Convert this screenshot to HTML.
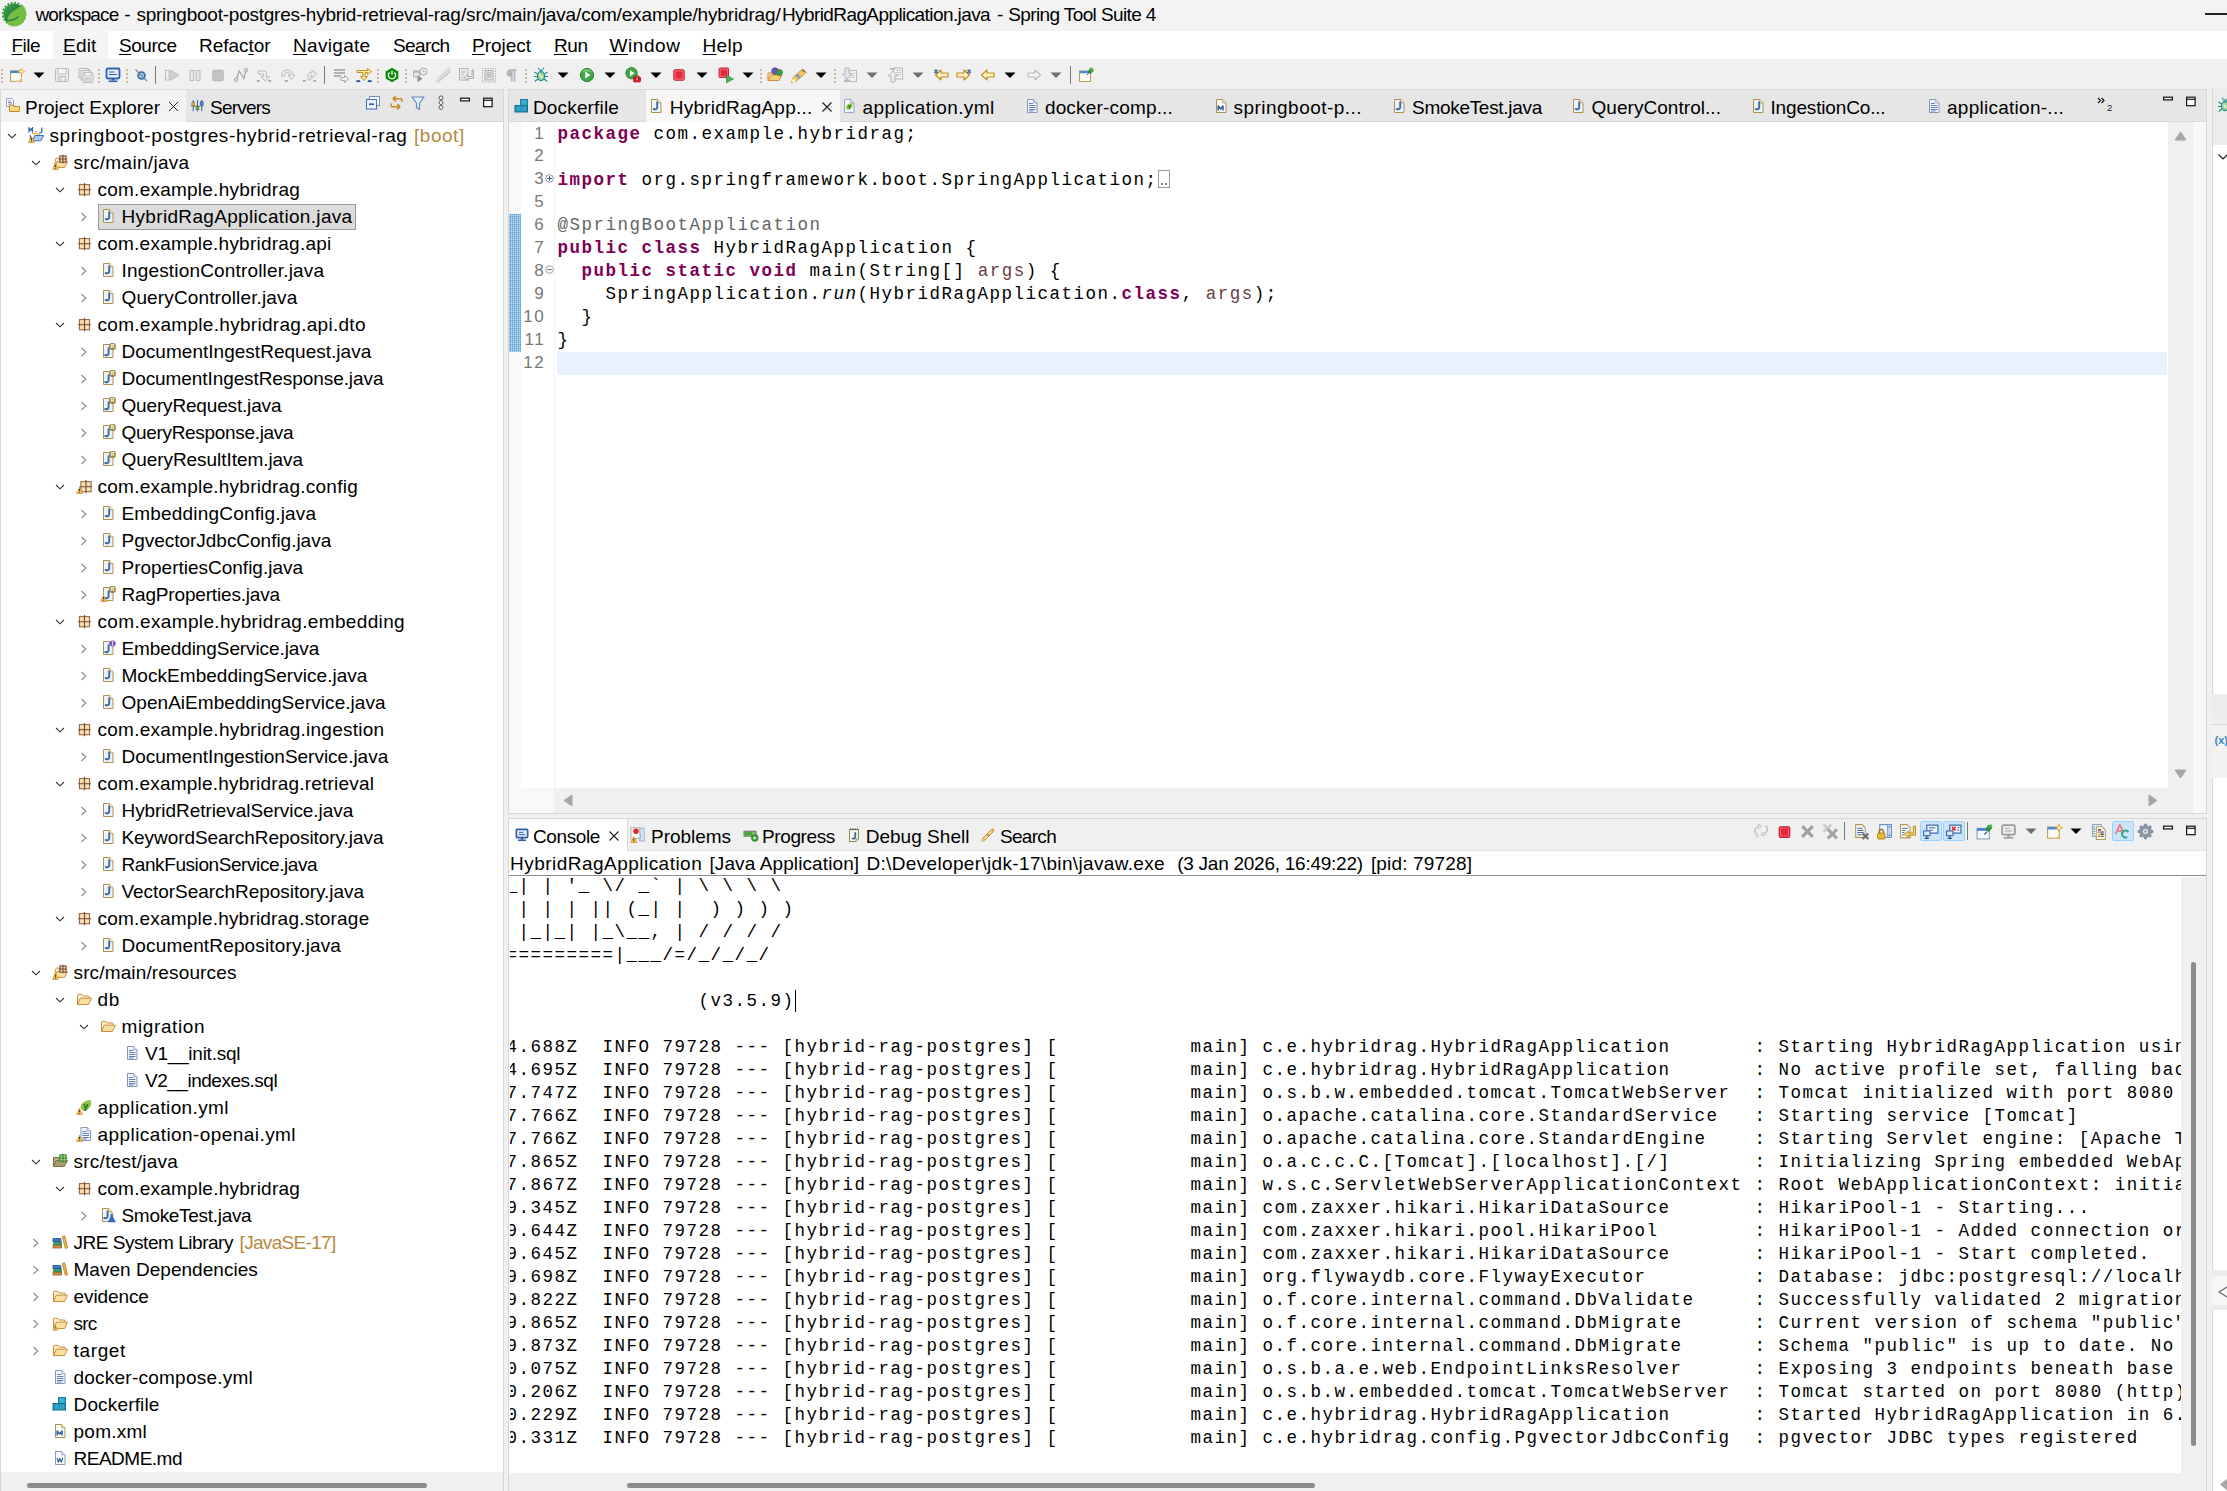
<!DOCTYPE html><html><head><meta charset="utf-8"><title>STS</title><style>
*{box-sizing:border-box;margin:0;padding:0}
html,body{width:2227px;height:1491px;overflow:hidden;background:#f0f0f0;font-family:'Liberation Sans',sans-serif;font-size:19px;color:#000}
.a{position:absolute}
.i{position:absolute;overflow:visible}
.t{position:absolute;white-space:pre;line-height:27px;height:27px}
.g{color:#b58a3c}
.m{font-family:'Liberation Mono',monospace;font-size:17.5px;letter-spacing:1.5px;white-space:pre}
.k{color:#7f0055;font-weight:bold}
.an{color:#646464}
.v{color:#6a3e3e}
u{text-decoration-thickness:1px;text-underline-offset:2px}
</style></head><body><svg width="0" height="0" style="position:absolute"><defs><symbol id="java" viewBox="0 0 16 16"><path d="M3.5 1.5h6.2l3.3 3.3v9.7h-9.5z" fill="#edf3fb" stroke="#b0904a" stroke-width="1"/><path d="M9.7 1.5v3.3h3.3" fill="#f7e9c4" stroke="#b0904a" stroke-width=".8"/><path d="M9.2 4.3v5.2c0 1.6-1.9 2.3-3.5 1.4" fill="none" stroke="#3d6ba3" stroke-width="1.9" stroke-linecap="round"/></symbol><symbol id="javaR" viewBox="0 0 16 16"><path d="M3.5 1.5h6.2l3.3 3.3v9.7h-9.5z" fill="#edf3fb" stroke="#b0904a" stroke-width="1"/><path d="M9.7 1.5v3.3h3.3" fill="#f7e9c4" stroke="#b0904a" stroke-width=".8"/><path d="M8.6 5.3v5.2c0 1.6-1.9 2.3-3.5 1.4" fill="none" stroke="#3d6ba3" stroke-width="1.9" stroke-linecap="round"/><rect x="9.8" y=".6" width="5.6" height="5.8" rx="1.4" fill="#a8923f" stroke="#8a7630" stroke-width=".7"/><text x="12.6" y="5.4" font-size="5" font-weight="bold" text-anchor="middle" fill="#fff" font-family="Liberation Sans">R</text></symbol><symbol id="javaRw" viewBox="0 0 16 16"><path d="M3.5 1.5h6.2l3.3 3.3v9.7h-9.5z" fill="#edf3fb" stroke="#b0904a" stroke-width="1"/><path d="M9.7 1.5v3.3h3.3" fill="#f7e9c4" stroke="#b0904a" stroke-width=".8"/><path d="M8.6 5.3v5.2c0 1.6-1.9 2.3-3.5 1.4" fill="none" stroke="#3d6ba3" stroke-width="1.9" stroke-linecap="round"/><rect x="9.8" y=".6" width="5.6" height="5.8" rx="1.4" fill="#a8923f" stroke="#8a7630" stroke-width=".7"/><text x="12.6" y="5.4" font-size="5" font-weight="bold" text-anchor="middle" fill="#fff" font-family="Liberation Sans">R</text><path d="M0.6 15.4 L3.5 9.2 L6.4 15.4 Z" fill="#f3c462" stroke="#c98f2b" stroke-width=".8" stroke-linejoin="round"/><path d="M3.5 11v2.3M3.5 14v.7" stroke="#3a2a10" stroke-width=".9"/></symbol><symbol id="javaI" viewBox="0 0 16 16"><path d="M3.5 1.5h6.2l3.3 3.3v9.7h-9.5z" fill="#edf3fb" stroke="#b0904a" stroke-width="1"/><path d="M9.7 1.5v3.3h3.3" fill="#f7e9c4" stroke="#b0904a" stroke-width=".8"/><path d="M8.6 5.3v5.2c0 1.6-1.9 2.3-3.5 1.4" fill="none" stroke="#3d6ba3" stroke-width="1.9" stroke-linecap="round"/><circle cx="12.6" cy="3.5" r="3" fill="#6b4bb5"/><path d="M11.5 1.9h2.2M12.6 1.9v3.2M11.5 5.1h2.2" stroke="#fff" stroke-width=".8"/></symbol><symbol id="javaT" viewBox="0 0 16 16"><path d="M2.5 1.5h6.2l3.3 3.3v9.7h-9.5z" fill="#edf3fb" stroke="#b0904a" stroke-width="1"/><path d="M8.7 1.5v3.3h3.3" fill="#f7e9c4" stroke="#b0904a" stroke-width=".8"/><path d="M7.6 4.3v5.2c0 1.6-1.9 2.3-3.5 1.4" fill="none" stroke="#3d6ba3" stroke-width="1.9" stroke-linecap="round"/><path d="M10.8 7.5h2v2.5l2.7 5h-7.4l2.7-5z" fill="#2f6fb8" stroke="#245a99" stroke-width=".5"/></symbol><symbol id="pkg" viewBox="0 0 16 16"><rect x="3.4" y="3.6" width="10.2" height="10.2" fill="#ecd2a0" stroke="#935f42" stroke-width="1"/><path d="M8.5 2v13.2M2 8.700h13" stroke="#7d4a34" stroke-width="1.100"/><path d="M4.400 4.600h3v3h-3zM9.600 4.600h3v3h-3zM4.400 9.800h3v3h-3zM9.600 9.800h3v3h-3z" fill="#f7e8c2" opacity=".800"/></symbol><symbol id="pkgw" viewBox="0 0 16 16"><g transform="translate(1.5,0)"><rect x="3.4" y="3.6" width="10.2" height="10.2" fill="#ecd2a0" stroke="#935f42" stroke-width="1"/><path d="M8.5 2v13.2M2 8.700h13" stroke="#7d4a34" stroke-width="1.100"/><path d="M4.400 4.600h3v3h-3zM9.600 4.600h3v3h-3zM4.400 9.800h3v3h-3zM9.600 9.800h3v3h-3z" fill="#f7e8c2" opacity=".800"/></g><path d="M0.6 15.4 L3.5 9.2 L6.4 15.4 Z" fill="#f3c462" stroke="#c98f2b" stroke-width=".8" stroke-linejoin="round"/><path d="M3.5 11v2.3M3.5 14v.7" stroke="#3a2a10" stroke-width=".9"/></symbol><symbol id="folder" viewBox="0 0 16 16"><path d="M1.5 13.5V4.2c0-.5.3-.8.8-.8h3.6l1.3 1.6h5.1c.5 0 .8.3.8.8v1.3" fill="#fbefcf" stroke="#c98d3c" stroke-width="1"/><path d="M1.6 13.5l2.6-6.300h11.300l-2.900 6.300z" fill="#f8dfa2" stroke="#c98d3c" stroke-width="1" stroke-linejoin="round"/></symbol><symbol id="folderw" viewBox="0 0 16 16"><path d="M1.5 13.5V4.2c0-.5.3-.8.8-.8h3.6l1.3 1.6h5.1c.5 0 .8.3.8.8v1.3" fill="#fbefcf" stroke="#c98d3c" stroke-width="1"/><path d="M1.6 13.5l2.6-6.300h11.300l-2.900 6.300z" fill="#f8dfa2" stroke="#c98d3c" stroke-width="1" stroke-linejoin="round"/><path d="M0.8 15.300 L3.300 10.200 L5.800 15.300 Z" fill="#f6d58a" stroke="#c98f2b" stroke-width=".7"/><path d="M3.300 11.800v1.800M3.300 14.200v.5" stroke="#3a2a10" stroke-width=".8"/></symbol><symbol id="srcf" viewBox="0 0 16 16"><path d="M2.300 13.300l1.400-8.300c.1-.6.400-.9 1-.9h2.500l.9 1" fill="#fbefcf" stroke="#c98d3c" stroke-width=".9"/><path d="M2.400 13.400l2.700-5.800h10.400l-3 5.800z" fill="#f8dfa2" stroke="#c98d3c" stroke-width="1" stroke-linejoin="round"/><g transform="translate(6.2,0.300) scale(.56)"><rect x="2.9" y="2.9" width="11.2" height="11.2" fill="#ecd0a0" stroke="#7a4a34" stroke-width="1.9"/><path d="M8.5 1v15M1 8.5h15" stroke="#7a4a34" stroke-width="1.9"/></g><path d="M0.6 15.4 L3.5 9.2 L6.4 15.4 Z" fill="#f3c462" stroke="#c98f2b" stroke-width=".8" stroke-linejoin="round"/><path d="M3.5 11v2.3M3.5 14v.7" stroke="#3a2a10" stroke-width=".9"/></symbol><symbol id="testf" viewBox="0 0 16 16"><path d="M1.500 13.500V4.500h5l1 1.400h3" fill="#b9ad86" stroke="#7d7048" stroke-width="1"/><path d="M1.600 13.500l2.600-6h11.200l-2.900 6z" fill="#a89c72" stroke="#7d7048" stroke-width="1" stroke-linejoin="round"/><g transform="translate(6.2,0.300) scale(.56)"><rect x="2.9" y="2.9" width="11.2" height="11.2" fill="#bfe39a" stroke="#2e7d1f" stroke-width="1.9"/><path d="M8.5 1v15M1 8.5h15" stroke="#2e7d1f" stroke-width="1.9"/></g></symbol><symbol id="proj" viewBox="0 0 16 16"><path d="M2.300 14.500V8" stroke="#4a7fc0" stroke-width="1.200"/><path d="M4 6.500h5l1 1h2" fill="none" stroke="#e0b85a" stroke-width="1.400"/><path d="M4.800 13.800l2-5.300h9l-3 5.300z" fill="#a9cdf2" stroke="#3f74b8" stroke-width="1" stroke-linejoin="round"/><path d="M1 5.500V1l1.700 2.200L4.400 1v4.500" fill="none" stroke="#2c65a6" stroke-width="1.300"/><path d="M13.800 .5v4c0 1.300-1.500 1.700-2.600 1" fill="none" stroke="#2c65a6" stroke-width="1.300"/><path d="M6.800 3.600l1 1.200h1" fill="none" stroke="#d9a33a" stroke-width="1"/><path d="M0.6 15.4 L3.5 9.2 L6.4 15.4 Z" fill="#f3c462" stroke="#c98f2b" stroke-width=".8" stroke-linejoin="round"/><path d="M3.5 11v2.3M3.5 14v.7" stroke="#3a2a10" stroke-width=".9"/></symbol><symbol id="file" viewBox="0 0 16 16"><path d="M3.5 1.5h6.2l3.3 3.3v9.7h-9.5z" fill="#f4f7fd" stroke="#8795b8" stroke-width="1"/><path d="M9.7 1.5v3.3h3.3" fill="#dfe6f5" stroke="#8795b8" stroke-width=".8"/><path d="M5 5.500h4M5 7.500h6.500M5 9.500h6.500M5 11.500h6.500M5 13h4.500" stroke="#5271b5" stroke-width=".9"/></symbol><symbol id="filew" viewBox="0 0 16 16"><g transform="translate(1.500,0)"><path d="M3.5 1.5h6.2l3.3 3.3v9.7h-9.5z" fill="#f4f7fd" stroke="#8795b8" stroke-width="1"/><path d="M9.7 1.5v3.3h3.3" fill="#dfe6f5" stroke="#8795b8" stroke-width=".8"/><path d="M5 5.500h4M5 7.500h6.500M5 9.500h6.500M5 11.500h6.500M5 13h4.500" stroke="#5271b5" stroke-width=".9"/></g><path d="M0.6 15.4 L3.5 9.2 L6.4 15.4 Z" fill="#f3c462" stroke="#c98f2b" stroke-width=".8" stroke-linejoin="round"/><path d="M3.5 11v2.3M3.5 14v.7" stroke="#3a2a10" stroke-width=".9"/></symbol><symbol id="yml" viewBox="0 0 16 16"><path d="M5 9c0-4 3-7 9.500-7.500c.8 5-1.500 9.500-6.500 9.500c-1.200 0-2.200-.5-3-2z" fill="#8cc63f" stroke="#6aa329" stroke-width=".6"/><text x="9.800" y="9.800" font-size="9" font-weight="bold" text-anchor="middle" fill="#116611" font-family="Liberation Sans">y</text><path d="M0.6 15.4 L3.5 9.2 L6.4 15.4 Z" fill="#f3c462" stroke="#c98f2b" stroke-width=".8" stroke-linejoin="round"/><path d="M3.5 11v2.3M3.5 14v.7" stroke="#3a2a10" stroke-width=".9"/></symbol><symbol id="ymltab" viewBox="0 0 16 16"><path d="M3.5 1.5h6.2l3.3 3.3v9.7h-9.5z" fill="#f4f7fd" stroke="#9aa6c4" stroke-width="1"/><path d="M9.7 1.5v3.3h3.3" fill="#dfe6f5" stroke="#9aa6c4" stroke-width=".8"/><path d="M5 10.500c0-3 1.500-5 6.500-5.500c.4 3.500-1 6.500-4.300 6.500c-.9 0-1.700-.300-2.200-1z" fill="#8cc63f"/><path d="M7 7l1.500 2v2M10 7L8.500 9" stroke="#176b17" stroke-width="1" fill="none"/></symbol><symbol id="docker" viewBox="0 0 16 16"><rect x="6.500" y="1.500" width="7" height="6" fill="#2aa8cc" stroke="#1d7d9c" stroke-width="1"/><rect x="1" y="7.500" width="12.500" height="6.500" fill="#1f8fb3" stroke="#196f8c" stroke-width="1"/><path d="M3 8.500v4.500M4.500 8.500v4.500M6 8.500v4.500M8.500 2.500v4M10 2.500v4M11.500 2.500v4M8.500 8.500v4.500M10 8.500v4.500M11.500 8.500v4.500" stroke="#4fc3e3" stroke-width=".6"/></symbol><symbol id="pom" viewBox="0 0 16 16"><path d="M3.5 1.5h6.2l3.3 3.3v9.7h-9.5z" fill="#fdfdf6" stroke="#a3915a" stroke-width="1"/><path d="M9.7 1.5v3.3h3.3" fill="#efe6c4" stroke="#a3915a" stroke-width=".8"/><path d="M5.200 12.500V8l2.400 3 2.400-3v4.500" fill="none" stroke="#2a5ea3" stroke-width="1.500" stroke-linejoin="round"/></symbol><symbol id="md" viewBox="0 0 16 16"><path d="M3.5 1.5h6.2l3.3 3.3v9.7h-9.5z" fill="#f7f9fd" stroke="#8a99ba" stroke-width="1"/><path d="M9.7 1.5v3.3h3.3" fill="#dfe6f5" stroke="#8a99ba" stroke-width=".8"/><path d="M5 8l1.300 4.300L7.800 8.500l1.500 3.800L10.700 8" fill="none" stroke="#2f5fa8" stroke-width="1.100" stroke-linejoin="round"/></symbol><symbol id="lib" viewBox="0 0 16 16"><rect x="1" y="11" width="8.500" height="3" fill="#d28a4a" stroke="#9c5a26" stroke-width=".8"/><rect x="1.800" y="7.800" width="7.500" height="3" fill="#3fa06b" stroke="#24724a" stroke-width=".8"/><rect x="1" y="4.600" width="7.800" height="3" fill="#3a78c2" stroke="#1f4f8f" stroke-width=".8"/><path d="M10.300 2.500l2.300-.8 3 12-2.300.7z" fill="#f0b450" stroke="#b67a1c" stroke-width=".8"/></symbol><symbol id="pexp" viewBox="0 0 16 16"><path d="M1.500 1.500h5l2 2v6h-7z" fill="#fff" stroke="#8795b8" stroke-width=".9"/><path d="M3 4h3M3 5.500h4M3 7h4" stroke="#5271b5" stroke-width=".7"/><path d="M4.500 14.500v-6.300h3.300l1 1.200h5.700v5.100z" fill="#f9d77a" stroke="#c08a2e" stroke-width="1"/></symbol><symbol id="servers" viewBox="0 0 16 16"><path d="M3.500 2v12M8 2v12M12.500 2v12" stroke="#3f6fb5" stroke-width="1.200"/><rect x="2" y="5" width="3" height="3.500" fill="#e8c24e" stroke="#8a6a1a" stroke-width=".7"/><rect x="6.500" y="9" width="3" height="3.500" fill="#6fb34a" stroke="#3a7a22" stroke-width=".7"/><rect x="11" y="4" width="3" height="3.500" fill="#4a90d9" stroke="#1f5a9c" stroke-width=".7"/><path d="M1 8.500h14" stroke="#555" stroke-width=".6"/></symbol><symbol id="console" viewBox="0 0 16 16"><rect x="1.500" y="1.500" width="13" height="9.500" rx="1.200" fill="#dfe9f7" stroke="#2f5fa5" stroke-width="1.900"/><path d="M4.500 5h5M4.500 7.500h7" stroke="#2f5fa5" stroke-width="1.100"/><path d="M3.500 14h9" stroke="#2f5fa5" stroke-width="1.800"/><path d="M8 11v2.500" stroke="#2f5fa5" stroke-width="2.600"/></symbol><symbol id="problems" viewBox="0 0 16 16"><rect x="1" y=".800" width="9" height="10.500" fill="#f4f8fd" stroke="#b0a67e" stroke-width=".800"/><path d="M9.800 1.200h4.200c.300 3 .300 6 0 9l1 3.800H9.500l1-3.800c-.500-3-.500-6-.700-9z" fill="#d6e6f7" stroke="#86a3cc" stroke-width=".800"/><circle cx="6" cy="4.300" r="2.700" fill="#e02a2a"/><path d="M.600 15.600L3.800 9.600 7 15.600z" fill="#f3c462" stroke="#c98f2b" stroke-width=".700" stroke-linejoin="round"/><path d="M3.800 11.500v2.300M3.800 14.400v.600" stroke="#3a2a10" stroke-width=".900"/></symbol><symbol id="progress" viewBox="0 0 16 16"><rect x="1" y="4.200" width="12" height="5" fill="#7cc36a" stroke="#5f6f66" stroke-width=".900"/><rect x="2" y="5.200" width="7" height="3" fill="#4aa53a"/><circle cx="11.800" cy="11" r="3.400" fill="#3e9a34" stroke="#2a7a24" stroke-width=".600"/><path d="M10.600 9.200l3 1.800-3 1.800z" fill="#fff"/></symbol><symbol id="dshell" viewBox="0 0 16 16"><path d="M3.500 2.500h9v9.500l-2.500 2.500h-6.500z" fill="#fdf8e2" stroke="#8a8a6a" stroke-width="1"/><path d="M12.500 12h-2.500v2.500" fill="#dfe9c8" stroke="#6f9a5a" stroke-width=".800"/><path d="M4.500 1.300v2M6.200 1.300v2M7.900 1.300v2M9.600 1.300v2M11.300 1.300v2" stroke="#555" stroke-width=".800"/><path d="M9.300 5.200v4.600c0 1.700-1.800 2.300-3.400 1.500" fill="none" stroke="#2f62a8" stroke-width="1.800"/></symbol><symbol id="search" viewBox="0 0 16 16"><path d="M1.500 14.500l3.500-1.500 8.500-8.500-2-2L3 11z" fill="#f3d48a" stroke="#b98a2e" stroke-width=".9"/><path d="M11.500 2.500l2 2 1.200-1.500-1.700-1.700z" fill="#d9a33a"/><path d="M7 7l2 2" stroke="#8a8a8a" stroke-width="1.500"/><path d="M1.500 14.500l2-.700-1.300-1.300z" fill="#fff7d0"/></symbol><symbol id="min" viewBox="0 0 16 16"><rect x="3.600" y="3.200" width="8.800" height="2.700" fill="#fff" stroke="#111" stroke-width="1.200"/></symbol><symbol id="max" viewBox="0 0 16 16"><rect x="3.600" y="3.200" width="8.500" height="8.500" fill="#fff" stroke="#111" stroke-width="1.200"/><path d="M3.600 5.300h8.500" stroke="#111" stroke-width="1.200"/></symbol><symbol id="collapse" viewBox="0 0 16 16"><rect x="4.500" y="1.500" width="10" height="9" fill="#fff" stroke="#6f8fc4" stroke-width="1"/><rect x="1.500" y="4.500" width="10" height="9.500" fill="#eef3fb" stroke="#4a74b5" stroke-width="1.100"/><path d="M4 9.200h5" stroke="#2d5b99" stroke-width="1.600"/></symbol><symbol id="link" viewBox="0 0 16 16"><path d="M13 3.500H4.500M4.500 3.500l3-2.500M4.500 3.500l3 2.500" fill="none" stroke="#c98d1c" stroke-width="1.500"/><path d="M3 11h8.500M11.500 11l-3-2.500M11.500 11l-3 2.500" fill="none" stroke="#c98d1c" stroke-width="1.500"/><path d="M13 3.500v3M3 11V8" stroke="#c98d1c" stroke-width="1.300"/></symbol><symbol id="filter" viewBox="0 0 16 16"><path d="M2 2h12l-4.500 6v6.500l-3-2V8z" fill="#eaf1fb" stroke="#5f86c2" stroke-width="1.200" stroke-linejoin="round"/></symbol><symbol id="dots3" viewBox="0 0 16 16"><circle cx="8" cy="2.800" r="1.900" fill="#fff" stroke="#555" stroke-width="1"/><circle cx="8" cy="7.600" r="1.900" fill="#fff" stroke="#555" stroke-width="1"/><circle cx="8" cy="12.400" r="1.900" fill="#fff" stroke="#555" stroke-width="1"/></symbol><symbol id="new" viewBox="0 0 16 16"><g transform="translate(0,.8)"><rect x="1.500" y="3" width="11" height="10.500" fill="#fdfdf5" stroke="#b59a56" stroke-width="1"/><rect x="1.500" y="3" width="11" height="2.300" fill="#4a86d4"/><path d="M12.500 9c0 3-2 4.500-6 4.500" fill="none" stroke="#f0d68a" stroke-width="1.200"/><path d="M12.300 .500l1 2.300 2.300 1-2.300 1-1 2.300-1-2.300-2.300-1 2.300-1z" fill="#fff3b8" stroke="#d6a02a" stroke-width=".800"/></g></symbol><symbol id="dd" viewBox="0 0 16 16"><path d="M1.700 5h12.600l-6.300 6.300z" fill="#000"/></symbol><symbol id="ddg" viewBox="0 0 16 16"><path d="M1.700 5h12.600l-6.300 6.300z" fill="#6e6e6e"/></symbol><symbol id="save" viewBox="0 0 16 16"><path d="M1.500 2.500c0-.600.400-1 1-1h11c.600 0 1 .400 1 1v11c0 .600-.400 1-1 1h-11c-.600 0-1-.400-1-1z" fill="#e9e9e9" stroke="#b8b8b8" stroke-width="1"/><rect x="4" y="1.500" width="8" height="5.500" fill="#f6f6f6" stroke="#b8b8b8" stroke-width=".800"/><rect x="4.500" y="9.500" width="7" height="5" fill="#dcdcdc" stroke="#b8b8b8" stroke-width=".800"/><rect x="8.500" y="10.500" width="1.800" height="3" fill="#f6f6f6"/></symbol><symbol id="saveall" viewBox="0 0 16 16"><path d="M1 1.500h9.500v3M1 1.500V11h2" fill="none" stroke="#b8b8b8" stroke-width="1"/><path d="M3 3.500h9.500v3M3 3.500V13h2" fill="none" stroke="#b8b8b8" stroke-width="1"/><rect x="5" y="5.500" width="10" height="10" rx="1" fill="#e9e9e9" stroke="#b8b8b8" stroke-width="1"/><rect x="7" y="5.500" width="6" height="3.500" fill="#f6f6f6" stroke="#b8b8b8" stroke-width=".700"/><rect x="7.500" y="11.500" width="5" height="4" fill="#dcdcdc" stroke="#b8b8b8" stroke-width=".700"/></symbol><symbol id="monitor" viewBox="0 0 16 16"><rect x="1.500" y="1.500" width="13" height="10" rx="1.500" fill="#e7effa" stroke="#2f62ad" stroke-width="1.800"/><path d="M4 5h5.500M4 7.500h8" stroke="#2f62ad" stroke-width="1.200"/><path d="M8 11.500v2" stroke="#2f62ad" stroke-width="2.500"/><path d="M3.500 14.300h9" stroke="#2f62ad" stroke-width="1.600"/></symbol><symbol id="skipbp" viewBox="0 0 16 16"><circle cx="8.500" cy="8.500" r="3.500" fill="#9fc3ea" stroke="#2a68b0" stroke-width="1.600"/><path d="M2.500 2.500l11.500 11.500" stroke="#7d8794" stroke-width="1.300"/></symbol><symbol id="resume" viewBox="0 0 16 16"><rect x="1.500" y="3.500" width="3.500" height="9.500" fill="#eee" stroke="#b8b8b8" stroke-width=".900"/><path d="M6.500 3.200l8.500 5-8.500 5z" fill="#d2d2d2" stroke="#b8b8b8" stroke-width=".900"/></symbol><symbol id="suspend" viewBox="0 0 16 16"><rect x="3" y="3.500" width="3.800" height="10" fill="#e6e6e6" stroke="#b8b8b8" stroke-width=".900"/><rect x="9.200" y="3.500" width="3.800" height="10" fill="#e6e6e6" stroke="#b8b8b8" stroke-width=".900"/></symbol><symbol id="term" viewBox="0 0 16 16"><rect x="3" y="3.500" width="10" height="10" rx="1" fill="#c4c4c4" stroke="#b8b8b8" stroke-width="1.400"/></symbol><symbol id="disc" viewBox="0 0 16 16"><path d="M3.500 12.500L6 4l5 7.500L13 3" fill="none" stroke="#a6a6a6" stroke-width="1.200"/><circle cx="3.200" cy="12.800" r="1.800" fill="#ddd" stroke="#a0a0a0" stroke-width=".800"/><circle cx="13" cy="3" r="1.800" fill="#ddd" stroke="#a0a0a0" stroke-width=".800"/></symbol><symbol id="stepin" viewBox="0 0 16 16"><path d="M2 4h6.500c1.500 0 2 .800 2 2v3.500h2.500l-4 4.500-4-4.500H7.500V7H2z" fill="#ececec" stroke="#b8b8b8" stroke-width=".900"/><path d="M1 14.500c.500-1 2-1 2.500 0M12.500 14.500c.500-1 2-1 2.500 0" stroke="#9a9a9a" stroke-width="1.300" fill="none"/></symbol><symbol id="stepover" viewBox="0 0 16 16"><path d="M1.500 9c0-4 2.500-6 6-6s5.500 2 5.500 5h2l-3.500 4.500L8 8h2.500c0-1.500-1-2.500-3-2.500S4.500 7 4.500 9z" fill="#ececec" stroke="#b8b8b8" stroke-width=".900"/><path d="M5 14.500c.500-1 2.500-1 3 0" stroke="#9a9a9a" stroke-width="1.300" fill="none"/></symbol><symbol id="stepret" viewBox="0 0 16 16"><path d="M6 13V8c0-1.500 1-2.500 2.500-2.500H10V3l4.500 4-4.500 4V8.500H9V13z" fill="#ececec" stroke="#b8b8b8" stroke-width=".900"/><path d="M1 14.500c.500-1 2-1 2.500 0M11.500 14.500c.500-1 2-1 2.500 0" stroke="#9a9a9a" stroke-width="1.300" fill="none"/></symbol><symbol id="dropframe" viewBox="0 0 16 16"><path d="M1 3h11M1 6h11M1 9h7" stroke="#9c9c9c" stroke-width="1.500"/><path d="M8 10.500h3.500V8.500l4 3.500-4 3.500v-2H8z" fill="#f4f4f4" stroke="#9c9c9c" stroke-width=".900"/></symbol><symbol id="stepfilt" viewBox="0 0 16 16"><path d="M1 3.500h10.500V1.500l4 3-4 3v-2H9v4h2.500l-3.500 4-3.500-4H7v-4H1z" fill="#fde9a8" stroke="#c98d1c" stroke-width="1"/><path d="M.500 14.800c.700-1.300 2.800-1.300 3.500 0M12 14.800c.700-1.300 2.800-1.300 3.500 0" stroke="#2d5b99" stroke-width="1.600" fill="none"/></symbol><symbol id="boot" viewBox="0 0 16 16"><path d="M8 .800l6.300 3.600v7.200L8 15.200l-6.300-3.600V4.400z" fill="#0a8a0a"/><path d="M5.500 5.500a3.600 3.600 0 1 0 5 0" fill="none" stroke="#fff" stroke-width="1.300"/><path d="M8 3.800v4" stroke="#fff" stroke-width="1.300"/></symbol><symbol id="g1" viewBox="0 0 16 16"><rect x="1.500" y="5" width="6" height="5" fill="#e4e4e4" stroke="#aaa" stroke-width=".900"/><path d="M1 4h7" stroke="#aaa" stroke-width="1.200"/><circle cx="11.500" cy="4.500" r="3.500" fill="#eee" stroke="#aaa" stroke-width="1"/><path d="M11.500 3v1.800h1.500" stroke="#aaa" stroke-width=".800" fill="none"/><path d="M5.500 8.500l5 3-5 4z" fill="#8e8e8e"/></symbol><symbol id="g2" viewBox="0 0 16 16"><path d="M.500 15l2.500-1 11-9V1.500L12 1 2 11z" fill="#dcdcdc" stroke="#cdcdcd" stroke-width=".600"/><path d="M3 14l11-9" stroke="#c0c0c0" stroke-width="1"/><path d="M.500 15h4" stroke="#d0d0d0" stroke-width="1"/></symbol><symbol id="g3" viewBox="0 0 16 16"><rect x="1.500" y="1.500" width="8.500" height="11.500" fill="#f2f2f2" stroke="#b0b0b0" stroke-width="1"/><path d="M3 4h5M3 6h5M3 8h3M3 10.500h3" stroke="#b8b8b8" stroke-width=".900"/><path d="M14 3v6.500H9.500V7.500L6 10.500l3.500 3v-2H15.500V3z" fill="#e6e6e6" stroke="#a8a8a8" stroke-width=".900"/></symbol><symbol id="g4" viewBox="0 0 16 16"><rect x="1.500" y="1.500" width="13" height="13.500" fill="#f0f0f0" stroke="#b4b4b4" stroke-width="1" stroke-dasharray="1.500 1"/><rect x="4" y="3.500" width="8" height="9.500" fill="#e2e2e2" stroke="#a8a8a8" stroke-width=".900"/><path d="M5.500 6h5M5.500 8h5M5.500 10h5" stroke="#a0a0a0" stroke-width=".900"/></symbol><symbol id="pilcrow" viewBox="0 0 16 16"><path d="M10.500 3v11.500M7.800 3v11.500M12.500 3H7c-2.200 0-3.500 1.200-3.500 3s1.300 3 3.500 3h1" fill="none" stroke="#b4b4b4" stroke-width="1.700"/><path d="M7 3.200c-1.800 0-2.800 1-2.800 2.800s1 2.800 2.800 2.800z" fill="#b4b4b4"/></symbol><symbol id="bug" viewBox="0 0 16 16"><ellipse cx="8" cy="9" rx="3.600" ry="4.600" fill="#9fd39a" stroke="#1f8a8a" stroke-width="1.200"/><circle cx="8" cy="4" r="1.800" fill="#3aa0a0"/><path d="M4.500 7L1.500 5M4.300 9.500H1M4.800 12l-3 2.500M11.500 7l3-2M11.700 9.500H15M11.200 12l3 2.500M6.500 2.500L5 .800M9.500 2.500L11 .800" stroke="#1f8a8a" stroke-width="1.100" fill="none"/><path d="M6.500 7.500l3 3.500" stroke="#e8f6e6" stroke-width="1.200"/></symbol><symbol id="run" viewBox="0 0 16 16"><circle cx="8" cy="8" r="6.600" fill="#3fa845" stroke="#1f7a2a" stroke-width=".900"/><path d="M3 5.500a5.500 5.500 0 0 1 10 0c-3-1.300-7-1.300-10 0z" fill="#8fd68f" opacity=".700"/><path d="M6.200 4.500l5.300 3.500-5.300 3.500z" fill="#fff"/></symbol><symbol id="runext" viewBox="0 0 16 16"><circle cx="6.500" cy="6.200" r="5.700" fill="#3fa845" stroke="#1f7a2a" stroke-width=".800"/><path d="M5 3.200l4.500 3-4.500 3z" fill="#fff"/><rect x="8.500" y="10" width="7" height="5" rx=".800" fill="#e0262d" stroke="#a5141a" stroke-width=".700"/><path d="M10.500 10V8.800h3V10M8.500 12h7" stroke="#a5141a" stroke-width=".900" fill="none"/><rect x="11.300" y="11.300" width="1.400" height="1.400" fill="#fff"/></symbol><symbol id="stop" viewBox="0 0 16 16"><rect x="2.800" y="2.800" width="10.400" height="10.400" rx="1.200" fill="#e8283a" stroke="#c01e2e" stroke-width="1"/><rect x="3.900" y="3.900" width="8.200" height="8.200" fill="none" stroke="#f58a94" stroke-width=".800"/></symbol><symbol id="relaunch" viewBox="0 0 16 16"><rect x="1" y="1" width="9.500" height="9.500" rx="1" fill="#e8283a" stroke="#c01e2e" stroke-width=".900"/><rect x="2.100" y="2.100" width="7.300" height="7.300" fill="none" stroke="#f58a94" stroke-width=".700"/><path d="M8.500 8.200l7 3.800-7 3.800z" fill="#4db356" stroke="#2d8a38" stroke-width=".700"/></symbol><symbol id="opentype" viewBox="0 0 16 16"><path d="M1 13.500V6h4l1 1.300h5.500V8.500" fill="#fbe7b0" stroke="#c98d3c" stroke-width="1"/><path d="M1.200 13.500l2.600-5.500h11l-2.800 5.500z" fill="#f5cf7a" stroke="#c98d3c" stroke-width="1" stroke-linejoin="round"/><circle cx="8" cy="4" r="3.300" fill="#6a55b8" stroke="#4a3a8a" stroke-width=".600"/><circle cx="12.500" cy="5.500" r="3" fill="#3e9a4a" stroke="#24702e" stroke-width=".600"/></symbol><symbol id="pen" viewBox="0 0 16 16"><path d="M.500 15.500l2-5.500 9-8 3.500 3.500-9.500 8.500z" fill="#f1c56a" stroke="#c08a2a" stroke-width=".800"/><path d="M4 8.500l3.500 3.500 2.500-2.300-3.500-3.500z" fill="#9a9aa0"/><path d="M.500 15.500l1.500-4 2.800 2.800z" fill="#fffbe0"/><path d="M11.500 2l3.500 3.500" stroke="#a87418" stroke-width="1"/><circle cx="12.200" cy="3.800" r=".900" fill="#2d5b99"/></symbol><symbol id="nextann" viewBox="0 0 16 16"><rect x="5.500" y="3.500" width="9" height="11" fill="#f2f2f2" stroke="#b8b8b8" stroke-width="1"/><path d="M8 6.500h5M8 8.500h5M8 10.500h5" stroke="#c4c4c4" stroke-width=".900"/><path d="M3 1h4v6h2.500L5 12 .500 7H3z" fill="#e6e6e6" stroke="#b0b0b0" stroke-width=".900"/><rect x="2" y="12.500" width="6" height="2.500" fill="#b8b8b8"/></symbol><symbol id="prevann" viewBox="0 0 16 16"><rect x="5.500" y="1" width="9" height="11" fill="#f2f2f2" stroke="#b8b8b8" stroke-width="1"/><path d="M8 3.500h5M8 5.500h5M8 7.500h5" stroke="#c4c4c4" stroke-width=".900"/><path d="M3 15h4V9h2.500L5 4 .500 9H3z" fill="#eee" stroke="#b0b0b0" stroke-width=".900"/><rect x="2" y="1" width="5" height="2" fill="#b8b8b8"/></symbol><symbol id="lastedit" viewBox="0 0 16 16"><path d="M2.5 8l5.500-5v3h7v4h-7v3z" fill="#fdf3c4" stroke="#c98d1c" stroke-width="1.200" stroke-linejoin="round"/><path d="M3 2v5M1 3.200l4 2.600M5 3.200l-4 2.600" stroke="#2d5b99" stroke-width="1"/></symbol><symbol id="nextedit" viewBox="0 0 16 16"><g transform="translate(16,0) scale(-1,1)"><path d="M2.5 8l5.500-5v3h7v4h-7v3z" fill="#fdf3c4" stroke="#c98d1c" stroke-width="1.200" stroke-linejoin="round"/><path d="M3 2v5M1 3.200l4 2.600M5 3.200l-4 2.600" stroke="#2d5b99" stroke-width="1"/></g></symbol><symbol id="back" viewBox="0 0 16 16"><path d="M1.5 8l5.500-5v3h7v4h-7v3z" fill="#fdf3c4" stroke="#c98d1c" stroke-width="1.200" stroke-linejoin="round"/></symbol><symbol id="fwdg" viewBox="0 0 16 16"><g transform="translate(16,0) scale(-1,1)"><path d="M1.5 8l5.500-5v3h7v4h-7v3z" fill="#f4f4f4" stroke="#bcbcbc" stroke-width="1.200" stroke-linejoin="round"/></g></symbol><symbol id="pined" viewBox="0 0 16 16"><rect x="1.500" y="4" width="11" height="10.500" fill="#fdfdf5" stroke="#b59a56" stroke-width="1"/><rect x="1.500" y="4" width="11" height="2.300" fill="#4a86d4"/><path d="M9 8l3-3" stroke="#555" stroke-width="1"/><path d="M10.500 4.500l2-3.500 3 2.500-3 3z" fill="#3a9a3a" stroke="#1f6f1f" stroke-width=".700"/><circle cx="13.500" cy="2.500" r="1.800" fill="#4db34d"/></symbol><symbol id="c_relaunch" viewBox="0 0 16 16"><path d="M2 9c-1-2 0-4 2-5l1.500 1.500L8 3 5 1.500 5.500 3C3 4 1.500 6 2 9z" fill="#f2f2f2" stroke="#b4b4b4" stroke-width=".800"/><path d="M11 3.500l2-1 1 2.500-1 .300c.800 1.500 0 3.500-2 4.500L9.500 8.500 7.500 11l3 1-.500-1c2.500-1 4-3.500 3-6" fill="#f2f2f2" stroke="#b4b4b4" stroke-width=".800"/><path d="M4 13.500c-1.500-1-2-2.500-1.500-4l1.500.500L5 12.500z" fill="#f2f2f2" stroke="#b4b4b4" stroke-width=".800"/></symbol><symbol id="c_stop" viewBox="0 0 16 16"><rect x="3" y="3.500" width="10" height="10" rx="1.200" fill="#e8283a" stroke="#c01e2e" stroke-width="1"/><rect x="4.200" y="4.700" width="7.600" height="7.600" fill="none" stroke="#f27a86" stroke-width=".700"/></symbol><symbol id="c_x" viewBox="0 0 16 16"><path d="M3 3l10 10M13 3L3 13" stroke="#a2a2a2" stroke-width="3"/></symbol><symbol id="c_xx" viewBox="0 0 16 16"><path d="M1.500 1.500l7 7M8.500 1.500l-7 7" stroke="#c8c8c8" stroke-width="2.200"/><path d="M5.500 6l8.500 8.500M14 6l-8.500 8.500" stroke="#a2a2a2" stroke-width="2.800"/></symbol><symbol id="c_clear" viewBox="0 0 16 16"><path d="M2.500 1.500h6l3 3v9h-9z" fill="#f6f8fc" stroke="#b39a5a" stroke-width="1"/><path d="M4 5h5M4 7h6M4 9h6M4 11h4" stroke="#4a6cb0" stroke-width="1"/><path d="M9 10l5.500 5M14.500 10L9 15" stroke="#6e6e6e" stroke-width="2"/></symbol><symbol id="c_lock" viewBox="0 0 16 16"><rect x="3.500" y="1.500" width="11" height="12" fill="#eaf3fd" stroke="#6a8cc4" stroke-width="1"/><rect x="11" y="1.500" width="3.500" height="12" fill="#c9d9f0" stroke="#6a8cc4" stroke-width=".800"/><rect x="12.200" y="3" width="1.200" height="1.200" fill="#2d5b99"/><rect x="12.200" y="11" width="1.200" height="1.200" fill="#2d5b99"/><rect x="1.500" y="9.500" width="7" height="5.500" rx="1" fill="#e9b93a" stroke="#a87a12" stroke-width=".800"/><path d="M3 9.500V8c0-2.500 4-2.500 4 0v1.500" fill="none" stroke="#a87a12" stroke-width="1.400"/></symbol><symbol id="c_wrap" viewBox="0 0 16 16"><path d="M1.500 1.500h6l3 3v9.500h-9z" fill="#fbfbf4" stroke="#b39a5a" stroke-width="1"/><path d="M3 5h5M3 7h3M3 9h2M3 11h2" stroke="#4a6cb0" stroke-width="1"/><path d="M13.500 3v6.500h-4.500v-2L5 10.500l4 3v-2h6.500V3z" fill="#f6d680" stroke="#b8861c" stroke-width=".900"/></symbol><symbol id="c_out" viewBox="0 0 16 16"><rect x="4.500" y="2" width="10.500" height="7.500" fill="#f4f8fd" stroke="#3465a8" stroke-width="1.100"/><path d="M6.500 4.500h6M6.500 6.800h4" stroke="#3465a8" stroke-width=".900"/><rect x="1.500" y="7.500" width="6" height="4.500" fill="#dce8f8" stroke="#3465a8" stroke-width="1"/><path d="M4.500 12v2M2.500 14.500h4" stroke="#2a4f8a" stroke-width="1.200"/></symbol><symbol id="c_err" viewBox="0 0 16 16"><rect x="4.500" y="2" width="10.500" height="7.500" fill="#f4f8fd" stroke="#3465a8" stroke-width="1.100"/><path d="M6.500 3.500l3.500 3.500M10 3.500L6.500 7" stroke="#e0262d" stroke-width="1.500"/><path d="M11.500 4.500h2M11.500 6.800h2" stroke="#3465a8" stroke-width=".900"/><rect x="1.500" y="7.500" width="6" height="4.500" fill="#dce8f8" stroke="#3465a8" stroke-width="1"/><path d="M4.500 12v2M2.500 14.500h4" stroke="#2a4f8a" stroke-width="1.200"/></symbol><symbol id="c_pin" viewBox="0 0 16 16"><rect x="1" y="5" width="11.500" height="10" fill="#f6faff" stroke="#8a9cc0" stroke-width="1"/><rect x="1" y="5" width="11.500" height="2.300" fill="#3f7ed0"/><path d="M8 11l2.500-3" stroke="#444" stroke-width="1"/><path d="M9.500 6l2-4 3.500 2.500-3 3.500z" fill="#2e9a3a" stroke="#1a6f24" stroke-width=".700"/><circle cx="13.500" cy="3" r="1.800" fill="#49b856"/></symbol><symbol id="c_disp" viewBox="0 0 16 16"><rect x="2" y="2" width="12" height="9" rx="1.200" fill="#ececec" stroke="#9c9c9c" stroke-width="1.600"/><path d="M4.500 5h4.500M4.500 7.500h7" stroke="#a6a6a6" stroke-width="1"/><path d="M8 11v2" stroke="#9c9c9c" stroke-width="2.200"/><path d="M3.500 14h9" stroke="#9c9c9c" stroke-width="1.500"/></symbol><symbol id="c_copy" viewBox="0 0 16 16"><rect x="1.500" y="1.500" width="8" height="11" fill="#eef3fb" stroke="#8a9cc0" stroke-width="1"/><path d="M5 3.500h5.500l3 3v9H5z" fill="#fffdf2" stroke="#b39a5a" stroke-width="1"/><path d="M6.500 6.500h3" stroke="#111" stroke-width="1.100"/><path d="M6.500 8.500h1.500" stroke="#e0262d" stroke-width="1.100"/><path d="M8.500 8.500h3.500" stroke="#1a3fd0" stroke-width="1.100"/><path d="M6.500 10.500h2" stroke="#e8a81c" stroke-width="1.100"/><path d="M9 10.500h3" stroke="#111" stroke-width="1.100"/><path d="M6.500 12.500h2" stroke="#e0262d" stroke-width="1.100"/><path d="M9 12.500h3" stroke="#1f8a2a" stroke-width="1.100"/><path d="M2.500 4h1M2.500 6h1M2.500 8h1M2.500 10h1" stroke="#1f8a2a" stroke-width="1"/></symbol><symbol id="c_ac" viewBox="0 0 16 16"><path d="M1.500 10.500L5.500 1.500 9 9.500M3 7.500h4.500" fill="none" stroke="#e8808a" stroke-width="1.700" stroke-linejoin="round"/><path d="M13.500 8.500c-1-1.500-3-2-4.500-1s-2 3-1 4.500 3 2 4.500 1.200" fill="none" stroke="#2aa88a" stroke-width="1.900"/></symbol><symbol id="c_gear" viewBox="0 0 16 16"><path d="M8 1l1 .100.400 1.800 1.300.600 1.600-1 1.300 1.300-1 1.600.600 1.300 1.800.400v1.800l-1.800.400-.600 1.300 1 1.600-1.300 1.300-1.600-1-1.300.600-.400 1.800H7l-.400-1.800-1.300-.600-1.600 1-1.300-1.300 1-1.600-.600-1.300L1 8.900V7.100l1.800-.400.600-1.300-1-1.600 1.300-1.300 1.600 1 1.300-.600L7 1.100z" fill="#8a97a8" stroke="#66748a" stroke-width=".600"/><circle cx="8" cy="8" r="3" fill="#e9edf3" stroke="#66748a" stroke-width=".700"/><circle cx="8" cy="8" r="1.200" fill="#8a97a8"/></symbol></defs></svg><div class="a" style="left:0px;top:0px;width:2227px;height:31px;background:#f3f3f3"></div><svg class="i" style="left:0px;top:0px;width:28px;height:28px" viewBox="0 0 28 28"><defs><linearGradient id="lg1" x1="0" y1="0" x2="1" y2="1"><stop offset="0" stop-color="#4aa84a"/><stop offset=".55" stop-color="#1c7f3c"/><stop offset="1" stop-color="#2a8a3e"/></linearGradient><clipPath id="lc"><circle cx="14" cy="14" r="12.300"/></clipPath></defs><circle cx="14" cy="14" r="10.600" fill="url(#lg1)"/><circle cx="14" cy="14" r="11.200" fill="none" stroke="#3a9a45" stroke-width="2" stroke-dasharray="1.900 1.600"/><g clip-path="url(#lc)"><path d="M23 5C17 8.500 11 12 8.500 16c-1.500 2.500-1.500 5 1 8l4.500 4h14V5z" fill="#76bd43"/><path d="M23.500 6.500A12 12 0 0 1 9 25l-3-3 8-3 6-6z" fill="#76bd43"/><path d="M7.800 18.500c.500-3 3-5.500 8-6.500 2.500-.500 4.500-1.500 6-3-.500 5-3 9-8.500 10-2 .400-4 .300-5.500-.500z" fill="#76bd43"/><path d="M5.500 20.500c4 .500 9-.500 13-4" fill="none" stroke="#1c7f3c" stroke-width="1.300"/></g></svg><span class="t" style="left:35.4px;top:1px;letter-spacing:-0.87px;">workspace</span><span class="t" style="left:124.3px;top:1px;letter-spacing:-0.428px;">-</span><span class="t" style="left:136.4px;top:1px;letter-spacing:-0.24px;">springboot-postgres-hybrid-retrieval-rag</span><span class="t" style="left:461px;top:1px;letter-spacing:-0.155px;">/src/main/java/com/example/hybridrag/</span><span class="t" style="left:781.9px;top:1px;letter-spacing:-0.586px;">HybridRagApplication.java</span><span class="t" style="left:996.9px;top:1px;letter-spacing:-0.428px;">-</span><span class="t" style="left:1008.2px;top:1px;letter-spacing:-0.608px;">Spring Tool Suite 4</span><div class="a" style="left:2205px;top:13px;width:22px;height:1.5px;background:#222"></div><div class="a" style="left:0px;top:31px;width:2227px;height:28px;background:#fff"></div><div class="a" style="left:52.5px;top:31px;width:55px;height:28px;background:#f5f5f5"></div><span class="t" style="left:11.5px;top:31.6px;letter-spacing:-0.531px;"><u>F</u>ile</span><span class="t" style="left:63px;top:31.6px;letter-spacing:0.188px;"><u>E</u>dit</span><span class="t" style="left:119px;top:31.6px;letter-spacing:-0.451px;"><u>S</u>ource</span><span class="t" style="left:199px;top:31.6px;letter-spacing:-0.039px;">Refac<u>t</u>or</span><span class="t" style="left:293px;top:31.6px;letter-spacing:0.312px;"><u>N</u>avigate</span><span class="t" style="left:393px;top:31.6px;letter-spacing:-0.617px;">Se<u>a</u>rch</span><span class="t" style="left:472px;top:31.6px;letter-spacing:-0.02px;"><u>P</u>roject</span><span class="t" style="left:554px;top:31.6px;letter-spacing:-0.453px;"><u>R</u>un</span><span class="t" style="left:609.5px;top:31.6px;letter-spacing:0.57px;"><u>W</u>indow</span><span class="t" style="left:702.5px;top:31.6px;letter-spacing:0.355px;"><u>H</u>elp</span><div class="a" style="left:0px;top:59px;width:2227px;height:30px;background:#f0f0f0"></div><div class="a" style="left:1px;top:68.5px;width:2px;height:2px;background:#c8b99a"></div><div class="a" style="left:1px;top:72.5px;width:2px;height:2px;background:#c8b99a"></div><div class="a" style="left:1px;top:76.5px;width:2px;height:2px;background:#c8b99a"></div><div class="a" style="left:1px;top:80.5px;width:2px;height:2px;background:#c8b99a"></div><svg class="i" style="left:9px;top:67px;width:16px;height:16px"><use href="#new"/></svg><svg class="i" style="left:32px;top:67.8px;width:14px;height:14px"><use href="#dd"/></svg><svg class="i" style="left:54px;top:67px;width:16px;height:16px"><use href="#save"/></svg><svg class="i" style="left:78px;top:67px;width:16px;height:16px"><use href="#saveall"/></svg><div class="a" style="left:98px;top:68.5px;width:2px;height:2px;background:#c8b99a"></div><div class="a" style="left:98px;top:72.5px;width:2px;height:2px;background:#c8b99a"></div><div class="a" style="left:98px;top:76.5px;width:2px;height:2px;background:#c8b99a"></div><div class="a" style="left:98px;top:80.5px;width:2px;height:2px;background:#c8b99a"></div><svg class="i" style="left:105px;top:67px;width:16px;height:16px"><use href="#monitor"/></svg><div class="a" style="left:126px;top:68.5px;width:2px;height:2px;background:#c8b99a"></div><div class="a" style="left:126px;top:72.5px;width:2px;height:2px;background:#c8b99a"></div><div class="a" style="left:126px;top:76.5px;width:2px;height:2px;background:#c8b99a"></div><div class="a" style="left:126px;top:80.5px;width:2px;height:2px;background:#c8b99a"></div><svg class="i" style="left:133px;top:67px;width:16px;height:16px"><use href="#skipbp"/></svg><div class="a" style="left:154.5px;top:66px;width:1px;height:18px;background:#7a7a7a"></div><svg class="i" style="left:164px;top:67px;width:16px;height:16px"><use href="#resume"/></svg><svg class="i" style="left:187px;top:67px;width:16px;height:16px"><use href="#suspend"/></svg><svg class="i" style="left:210px;top:67px;width:16px;height:16px"><use href="#term"/></svg><svg class="i" style="left:233px;top:67px;width:16px;height:16px"><use href="#disc"/></svg><svg class="i" style="left:256px;top:67px;width:16px;height:16px"><use href="#stepin"/></svg><svg class="i" style="left:279.6px;top:67px;width:16px;height:16px"><use href="#stepover"/></svg><svg class="i" style="left:302px;top:67px;width:16px;height:16px"><use href="#stepret"/></svg><div class="a" style="left:324.0px;top:66px;width:1px;height:18px;background:#7a7a7a"></div><svg class="i" style="left:332.5px;top:67px;width:16px;height:16px"><use href="#dropframe"/></svg><svg class="i" style="left:355.7px;top:67px;width:16px;height:16px"><use href="#stepfilt"/></svg><div class="a" style="left:377px;top:68.5px;width:2px;height:2px;background:#c8b99a"></div><div class="a" style="left:377px;top:72.5px;width:2px;height:2px;background:#c8b99a"></div><div class="a" style="left:377px;top:76.5px;width:2px;height:2px;background:#c8b99a"></div><div class="a" style="left:377px;top:80.5px;width:2px;height:2px;background:#c8b99a"></div><svg class="i" style="left:384px;top:67px;width:16px;height:16px"><use href="#boot"/></svg><div class="a" style="left:405px;top:68.5px;width:2px;height:2px;background:#c8b99a"></div><div class="a" style="left:405px;top:72.5px;width:2px;height:2px;background:#c8b99a"></div><div class="a" style="left:405px;top:76.5px;width:2px;height:2px;background:#c8b99a"></div><div class="a" style="left:405px;top:80.5px;width:2px;height:2px;background:#c8b99a"></div><svg class="i" style="left:412px;top:67px;width:16px;height:16px"><use href="#g1"/></svg><svg class="i" style="left:436px;top:67px;width:16px;height:16px"><use href="#g2"/></svg><svg class="i" style="left:458px;top:67px;width:16px;height:16px"><use href="#g3"/></svg><svg class="i" style="left:481px;top:67px;width:16px;height:16px"><use href="#g4"/></svg><svg class="i" style="left:504px;top:67px;width:16px;height:16px"><use href="#pilcrow"/></svg><div class="a" style="left:525px;top:68.5px;width:2px;height:2px;background:#c8b99a"></div><div class="a" style="left:525px;top:72.5px;width:2px;height:2px;background:#c8b99a"></div><div class="a" style="left:525px;top:76.5px;width:2px;height:2px;background:#c8b99a"></div><div class="a" style="left:525px;top:80.5px;width:2px;height:2px;background:#c8b99a"></div><svg class="i" style="left:533px;top:67px;width:16px;height:16px"><use href="#bug"/></svg><svg class="i" style="left:556px;top:67.8px;width:14px;height:14px"><use href="#dd"/></svg><svg class="i" style="left:579px;top:67px;width:16px;height:16px"><use href="#run"/></svg><svg class="i" style="left:602.5px;top:67.8px;width:14px;height:14px"><use href="#dd"/></svg><svg class="i" style="left:624.5px;top:67px;width:16px;height:16px"><use href="#runext"/></svg><svg class="i" style="left:648.8px;top:67.8px;width:14px;height:14px"><use href="#dd"/></svg><svg class="i" style="left:671.4px;top:67px;width:16px;height:16px"><use href="#stop"/></svg><svg class="i" style="left:694.7px;top:67.8px;width:14px;height:14px"><use href="#dd"/></svg><svg class="i" style="left:717.6px;top:67px;width:16px;height:16px"><use href="#relaunch"/></svg><svg class="i" style="left:740.6px;top:67.8px;width:14px;height:14px"><use href="#dd"/></svg><div class="a" style="left:760px;top:68.5px;width:2px;height:2px;background:#c8b99a"></div><div class="a" style="left:760px;top:72.5px;width:2px;height:2px;background:#c8b99a"></div><div class="a" style="left:760px;top:76.5px;width:2px;height:2px;background:#c8b99a"></div><div class="a" style="left:760px;top:80.5px;width:2px;height:2px;background:#c8b99a"></div><svg class="i" style="left:766.6px;top:67px;width:16px;height:16px"><use href="#opentype"/></svg><svg class="i" style="left:791px;top:67px;width:16px;height:16px"><use href="#pen"/></svg><svg class="i" style="left:814px;top:67.8px;width:14px;height:14px"><use href="#dd"/></svg><div class="a" style="left:834px;top:68.5px;width:2px;height:2px;background:#c8b99a"></div><div class="a" style="left:834px;top:72.5px;width:2px;height:2px;background:#c8b99a"></div><div class="a" style="left:834px;top:76.5px;width:2px;height:2px;background:#c8b99a"></div><div class="a" style="left:834px;top:80.5px;width:2px;height:2px;background:#c8b99a"></div><svg class="i" style="left:842px;top:67px;width:16px;height:16px"><use href="#nextann"/></svg><svg class="i" style="left:865px;top:67.8px;width:14px;height:14px"><use href="#ddg"/></svg><svg class="i" style="left:888px;top:67px;width:16px;height:16px"><use href="#prevann"/></svg><svg class="i" style="left:911px;top:67.8px;width:14px;height:14px"><use href="#ddg"/></svg><svg class="i" style="left:933px;top:67px;width:16px;height:16px"><use href="#lastedit"/></svg><svg class="i" style="left:956px;top:67px;width:16px;height:16px"><use href="#nextedit"/></svg><svg class="i" style="left:980px;top:67px;width:16px;height:16px"><use href="#back"/></svg><svg class="i" style="left:1003px;top:67.8px;width:14px;height:14px"><use href="#dd"/></svg><svg class="i" style="left:1026px;top:67px;width:16px;height:16px"><use href="#fwdg"/></svg><svg class="i" style="left:1049px;top:67.8px;width:14px;height:14px"><use href="#ddg"/></svg><div class="a" style="left:1069.5px;top:66px;width:1px;height:18px;background:#7a7a7a"></div><svg class="i" style="left:1078px;top:67px;width:16px;height:16px"><use href="#pined"/></svg><div class="a" style="left:0px;top:89px;width:504px;height:1402px;background:#fff;border:1px solid #d6d6d6;border-top-color:#dcdcdc"></div><div class="a" style="left:1px;top:90px;width:502px;height:32px;background:#e6e6e6;border-bottom:1px solid #dadada"></div><div class="a" style="left:1px;top:90px;width:185px;height:32px;background:#f3f3f3"></div><svg class="i" style="left:5px;top:97px;width:16px;height:16px"><use href="#pexp"/></svg><span class="t" style="left:25px;top:93.5px;letter-spacing:-0.011px;">Project Explorer</span><svg class="i" style="left:168px;top:101px;width:11px;height:11px" viewBox="0 0 11 11"><path d="M1 1l9 9M10 1l-9 9" stroke="#222" stroke-width="1"/></svg><svg class="i" style="left:190px;top:98px;width:15px;height:15px"><use href="#servers"/></svg><span class="t" style="left:210px;top:93.5px;letter-spacing:-0.781px;">Servers</span><svg class="i" style="left:365px;top:95px;width:16px;height:16px"><use href="#collapse"/></svg><svg class="i" style="left:388px;top:95px;width:17px;height:17px"><use href="#link"/></svg><svg class="i" style="left:410px;top:95px;width:16px;height:16px"><use href="#filter"/></svg><svg class="i" style="left:433px;top:94.7px;width:16px;height:16px"><use href="#dots3"/></svg><svg class="i" style="left:457px;top:94.5px;width:16px;height:16px"><use href="#min"/></svg><svg class="i" style="left:480px;top:94.6px;width:16px;height:16px"><use href="#max"/></svg><svg class="i" style="left:6px;top:131.8px;width:12px;height:8px" viewBox="0 0 12 8"><path d="M2 2L6 5.800l4-3.800" fill="none" stroke="#333" stroke-width="1.100"/></svg><svg class="i" style="left:28px;top:127px;width:16px;height:16px"><use href="#proj"/></svg><span class="t" style="left:49.5px;top:122px;letter-spacing:0.607px;">springboot-postgres-hybrid-retrieval-rag</span><span class="t" style="left:414px;top:122px;letter-spacing:0.526px;color:#b58a3c;">[boot]</span><svg class="i" style="left:30px;top:158.8px;width:12px;height:8px" viewBox="0 0 12 8"><path d="M2 2L6 5.800l4-3.800" fill="none" stroke="#333" stroke-width="1.100"/></svg><svg class="i" style="left:52px;top:154px;width:16px;height:16px"><use href="#srcf"/></svg><span class="t" style="left:73.5px;top:149px;letter-spacing:0.314px;">src/main/java</span><svg class="i" style="left:54px;top:185.8px;width:12px;height:8px" viewBox="0 0 12 8"><path d="M2 2L6 5.800l4-3.800" fill="none" stroke="#333" stroke-width="1.100"/></svg><svg class="i" style="left:76px;top:181px;width:16px;height:16px"><use href="#pkg"/></svg><span class="t" style="left:97.5px;top:176px;letter-spacing:0.239px;">com.example.hybridrag</span><div class="a" style="left:98px;top:204px;width:257.5px;height:26px;background:#dcdcdc;border:1px solid #9a9a9a"></div><svg class="i" style="left:80px;top:210.8px;width:8px;height:12px" viewBox="0 0 8 12"><path d="M1.500 2L5.800 6l-4.300 4" fill="none" stroke="#8c8c8c" stroke-width="1.100"/></svg><svg class="i" style="left:100px;top:208px;width:16px;height:16px"><use href="#java"/></svg><span class="t" style="left:121.5px;top:203px;letter-spacing:0.326px;">HybridRagApplication.java</span><svg class="i" style="left:54px;top:239.8px;width:12px;height:8px" viewBox="0 0 12 8"><path d="M2 2L6 5.800l4-3.800" fill="none" stroke="#333" stroke-width="1.100"/></svg><svg class="i" style="left:76px;top:235px;width:16px;height:16px"><use href="#pkg"/></svg><span class="t" style="left:97.5px;top:230px;letter-spacing:0.235px;">com.example.hybridrag.api</span><svg class="i" style="left:80px;top:264.8px;width:8px;height:12px" viewBox="0 0 8 12"><path d="M1.500 2L5.800 6l-4.300 4" fill="none" stroke="#8c8c8c" stroke-width="1.100"/></svg><svg class="i" style="left:100px;top:262px;width:16px;height:16px"><use href="#java"/></svg><span class="t" style="left:121.5px;top:257px;letter-spacing:0.172px;">IngestionController.java</span><svg class="i" style="left:80px;top:291.8px;width:8px;height:12px" viewBox="0 0 8 12"><path d="M1.500 2L5.800 6l-4.300 4" fill="none" stroke="#8c8c8c" stroke-width="1.100"/></svg><svg class="i" style="left:100px;top:289px;width:16px;height:16px"><use href="#java"/></svg><span class="t" style="left:121.5px;top:284px;letter-spacing:0.135px;">QueryController.java</span><svg class="i" style="left:54px;top:320.8px;width:12px;height:8px" viewBox="0 0 12 8"><path d="M2 2L6 5.800l4-3.800" fill="none" stroke="#333" stroke-width="1.100"/></svg><svg class="i" style="left:76px;top:316px;width:16px;height:16px"><use href="#pkg"/></svg><span class="t" style="left:97.5px;top:311px;letter-spacing:0.293px;">com.example.hybridrag.api.dto</span><svg class="i" style="left:80px;top:345.8px;width:8px;height:12px" viewBox="0 0 8 12"><path d="M1.500 2L5.800 6l-4.300 4" fill="none" stroke="#8c8c8c" stroke-width="1.100"/></svg><svg class="i" style="left:100px;top:343px;width:16px;height:16px"><use href="#javaR"/></svg><span class="t" style="left:121.5px;top:338px;letter-spacing:0.021px;">DocumentIngestRequest.java</span><svg class="i" style="left:80px;top:372.8px;width:8px;height:12px" viewBox="0 0 8 12"><path d="M1.500 2L5.800 6l-4.300 4" fill="none" stroke="#8c8c8c" stroke-width="1.100"/></svg><svg class="i" style="left:100px;top:370px;width:16px;height:16px"><use href="#javaR"/></svg><span class="t" style="left:121.5px;top:365px;letter-spacing:-0.08px;">DocumentIngestResponse.java</span><svg class="i" style="left:80px;top:399.8px;width:8px;height:12px" viewBox="0 0 8 12"><path d="M1.500 2L5.800 6l-4.300 4" fill="none" stroke="#8c8c8c" stroke-width="1.100"/></svg><svg class="i" style="left:100px;top:397px;width:16px;height:16px"><use href="#javaR"/></svg><span class="t" style="left:121.5px;top:392px;letter-spacing:-0.168px;">QueryRequest.java</span><svg class="i" style="left:80px;top:426.8px;width:8px;height:12px" viewBox="0 0 8 12"><path d="M1.500 2L5.800 6l-4.300 4" fill="none" stroke="#8c8c8c" stroke-width="1.100"/></svg><svg class="i" style="left:100px;top:424px;width:16px;height:16px"><use href="#javaR"/></svg><span class="t" style="left:121.5px;top:419px;letter-spacing:-0.313px;">QueryResponse.java</span><svg class="i" style="left:80px;top:453.8px;width:8px;height:12px" viewBox="0 0 8 12"><path d="M1.500 2L5.800 6l-4.300 4" fill="none" stroke="#8c8c8c" stroke-width="1.100"/></svg><svg class="i" style="left:100px;top:451px;width:16px;height:16px"><use href="#javaR"/></svg><span class="t" style="left:121.5px;top:446px;letter-spacing:-0.059px;">QueryResultItem.java</span><svg class="i" style="left:54px;top:482.8px;width:12px;height:8px" viewBox="0 0 12 8"><path d="M2 2L6 5.800l4-3.800" fill="none" stroke="#333" stroke-width="1.100"/></svg><svg class="i" style="left:76px;top:478px;width:16px;height:16px"><use href="#pkgw"/></svg><span class="t" style="left:97.5px;top:473px;letter-spacing:0.251px;">com.example.hybridrag.config</span><svg class="i" style="left:80px;top:507.79999999999995px;width:8px;height:12px" viewBox="0 0 8 12"><path d="M1.500 2L5.800 6l-4.300 4" fill="none" stroke="#8c8c8c" stroke-width="1.100"/></svg><svg class="i" style="left:100px;top:505px;width:16px;height:16px"><use href="#java"/></svg><span class="t" style="left:121.5px;top:500px;letter-spacing:0.181px;">EmbeddingConfig.java</span><svg class="i" style="left:80px;top:534.8px;width:8px;height:12px" viewBox="0 0 8 12"><path d="M1.500 2L5.800 6l-4.300 4" fill="none" stroke="#8c8c8c" stroke-width="1.100"/></svg><svg class="i" style="left:100px;top:532px;width:16px;height:16px"><use href="#java"/></svg><span class="t" style="left:121.5px;top:527px;letter-spacing:-0.021px;">PgvectorJdbcConfig.java</span><svg class="i" style="left:80px;top:561.8px;width:8px;height:12px" viewBox="0 0 8 12"><path d="M1.500 2L5.800 6l-4.300 4" fill="none" stroke="#8c8c8c" stroke-width="1.100"/></svg><svg class="i" style="left:100px;top:559px;width:16px;height:16px"><use href="#java"/></svg><span class="t" style="left:121.5px;top:554px;letter-spacing:-0.007px;">PropertiesConfig.java</span><svg class="i" style="left:80px;top:588.8px;width:8px;height:12px" viewBox="0 0 8 12"><path d="M1.500 2L5.800 6l-4.300 4" fill="none" stroke="#8c8c8c" stroke-width="1.100"/></svg><svg class="i" style="left:100px;top:586px;width:16px;height:16px"><use href="#javaRw"/></svg><span class="t" style="left:121.5px;top:581px;letter-spacing:-0.172px;">RagProperties.java</span><svg class="i" style="left:54px;top:617.8px;width:12px;height:8px" viewBox="0 0 12 8"><path d="M2 2L6 5.800l4-3.800" fill="none" stroke="#333" stroke-width="1.100"/></svg><svg class="i" style="left:76px;top:613px;width:16px;height:16px"><use href="#pkg"/></svg><span class="t" style="left:97.5px;top:608px;letter-spacing:0.346px;">com.example.hybridrag.embedding</span><svg class="i" style="left:80px;top:642.8px;width:8px;height:12px" viewBox="0 0 8 12"><path d="M1.500 2L5.800 6l-4.300 4" fill="none" stroke="#8c8c8c" stroke-width="1.100"/></svg><svg class="i" style="left:100px;top:640px;width:16px;height:16px"><use href="#javaI"/></svg><span class="t" style="left:121.5px;top:635px;letter-spacing:-0.092px;">EmbeddingService.java</span><svg class="i" style="left:80px;top:669.8px;width:8px;height:12px" viewBox="0 0 8 12"><path d="M1.500 2L5.800 6l-4.300 4" fill="none" stroke="#8c8c8c" stroke-width="1.100"/></svg><svg class="i" style="left:100px;top:667px;width:16px;height:16px"><use href="#java"/></svg><span class="t" style="left:121.5px;top:662px;letter-spacing:0.039px;">MockEmbeddingService.java</span><svg class="i" style="left:80px;top:696.8px;width:8px;height:12px" viewBox="0 0 8 12"><path d="M1.500 2L5.800 6l-4.300 4" fill="none" stroke="#8c8c8c" stroke-width="1.100"/></svg><svg class="i" style="left:100px;top:694px;width:16px;height:16px"><use href="#java"/></svg><span class="t" style="left:121.5px;top:689px;letter-spacing:0.041px;">OpenAiEmbeddingService.java</span><svg class="i" style="left:54px;top:725.8px;width:12px;height:8px" viewBox="0 0 12 8"><path d="M2 2L6 5.800l4-3.800" fill="none" stroke="#333" stroke-width="1.100"/></svg><svg class="i" style="left:76px;top:721px;width:16px;height:16px"><use href="#pkg"/></svg><span class="t" style="left:97.5px;top:716px;letter-spacing:0.261px;">com.example.hybridrag.ingestion</span><svg class="i" style="left:80px;top:750.8px;width:8px;height:12px" viewBox="0 0 8 12"><path d="M1.500 2L5.800 6l-4.300 4" fill="none" stroke="#8c8c8c" stroke-width="1.100"/></svg><svg class="i" style="left:100px;top:748px;width:16px;height:16px"><use href="#java"/></svg><span class="t" style="left:121.5px;top:743px;letter-spacing:-0.017px;">DocumentIngestionService.java</span><svg class="i" style="left:54px;top:779.8px;width:12px;height:8px" viewBox="0 0 12 8"><path d="M2 2L6 5.800l4-3.800" fill="none" stroke="#333" stroke-width="1.100"/></svg><svg class="i" style="left:76px;top:775px;width:16px;height:16px"><use href="#pkg"/></svg><span class="t" style="left:97.5px;top:770px;letter-spacing:0.205px;">com.example.hybridrag.retrieval</span><svg class="i" style="left:80px;top:804.8px;width:8px;height:12px" viewBox="0 0 8 12"><path d="M1.500 2L5.800 6l-4.300 4" fill="none" stroke="#8c8c8c" stroke-width="1.100"/></svg><svg class="i" style="left:100px;top:802px;width:16px;height:16px"><use href="#java"/></svg><span class="t" style="left:121.5px;top:797px;letter-spacing:-0.062px;">HybridRetrievalService.java</span><svg class="i" style="left:80px;top:831.8px;width:8px;height:12px" viewBox="0 0 8 12"><path d="M1.500 2L5.800 6l-4.300 4" fill="none" stroke="#8c8c8c" stroke-width="1.100"/></svg><svg class="i" style="left:100px;top:829px;width:16px;height:16px"><use href="#java"/></svg><span class="t" style="left:121.5px;top:824px;letter-spacing:-0.063px;">KeywordSearchRepository.java</span><svg class="i" style="left:80px;top:858.8px;width:8px;height:12px" viewBox="0 0 8 12"><path d="M1.500 2L5.800 6l-4.300 4" fill="none" stroke="#8c8c8c" stroke-width="1.100"/></svg><svg class="i" style="left:100px;top:856px;width:16px;height:16px"><use href="#java"/></svg><span class="t" style="left:121.5px;top:851px;letter-spacing:-0.417px;">RankFusionService.java</span><svg class="i" style="left:80px;top:885.8px;width:8px;height:12px" viewBox="0 0 8 12"><path d="M1.500 2L5.800 6l-4.300 4" fill="none" stroke="#8c8c8c" stroke-width="1.100"/></svg><svg class="i" style="left:100px;top:883px;width:16px;height:16px"><use href="#java"/></svg><span class="t" style="left:121.5px;top:878px;letter-spacing:-0.041px;">VectorSearchRepository.java</span><svg class="i" style="left:54px;top:914.8px;width:12px;height:8px" viewBox="0 0 12 8"><path d="M2 2L6 5.800l4-3.800" fill="none" stroke="#333" stroke-width="1.100"/></svg><svg class="i" style="left:76px;top:910px;width:16px;height:16px"><use href="#pkg"/></svg><span class="t" style="left:97.5px;top:905px;letter-spacing:0.199px;">com.example.hybridrag.storage</span><svg class="i" style="left:80px;top:939.8px;width:8px;height:12px" viewBox="0 0 8 12"><path d="M1.500 2L5.800 6l-4.300 4" fill="none" stroke="#8c8c8c" stroke-width="1.100"/></svg><svg class="i" style="left:100px;top:937px;width:16px;height:16px"><use href="#java"/></svg><span class="t" style="left:121.5px;top:932px;letter-spacing:0.15px;">DocumentRepository.java</span><svg class="i" style="left:30px;top:968.8px;width:12px;height:8px" viewBox="0 0 12 8"><path d="M2 2L6 5.800l4-3.800" fill="none" stroke="#333" stroke-width="1.100"/></svg><svg class="i" style="left:52px;top:964px;width:16px;height:16px"><use href="#srcf"/></svg><span class="t" style="left:73.5px;top:959px;letter-spacing:0.144px;">src/main/resources</span><svg class="i" style="left:54px;top:995.8px;width:12px;height:8px" viewBox="0 0 12 8"><path d="M2 2L6 5.800l4-3.800" fill="none" stroke="#333" stroke-width="1.100"/></svg><svg class="i" style="left:76px;top:991px;width:16px;height:16px"><use href="#folder"/></svg><span class="t" style="left:97.5px;top:986px;letter-spacing:0.68px;">db</span><svg class="i" style="left:78px;top:1022.8px;width:12px;height:8px" viewBox="0 0 12 8"><path d="M2 2L6 5.800l4-3.800" fill="none" stroke="#333" stroke-width="1.100"/></svg><svg class="i" style="left:100px;top:1018px;width:16px;height:16px"><use href="#folder"/></svg><span class="t" style="left:121.5px;top:1013px;letter-spacing:0.616px;">migration</span><svg class="i" style="left:124px;top:1045px;width:16px;height:16px"><use href="#file"/></svg><span class="t" style="left:145px;top:1040px;letter-spacing:-0.253px;">V1__init.sql</span><svg class="i" style="left:124px;top:1072px;width:16px;height:16px"><use href="#file"/></svg><span class="t" style="left:145px;top:1067px;letter-spacing:-0.483px;">V2__indexes.sql</span><svg class="i" style="left:76px;top:1099px;width:16px;height:16px"><use href="#yml"/></svg><span class="t" style="left:97.5px;top:1094px;letter-spacing:0.382px;">application.yml</span><svg class="i" style="left:76px;top:1126px;width:16px;height:16px"><use href="#filew"/></svg><span class="t" style="left:97.5px;top:1121px;letter-spacing:0.429px;">application-openai.yml</span><svg class="i" style="left:30px;top:1157.8px;width:12px;height:8px" viewBox="0 0 12 8"><path d="M2 2L6 5.800l4-3.800" fill="none" stroke="#333" stroke-width="1.100"/></svg><svg class="i" style="left:52px;top:1153px;width:16px;height:16px"><use href="#testf"/></svg><span class="t" style="left:73.5px;top:1148px;letter-spacing:0.256px;">src/test/java</span><svg class="i" style="left:54px;top:1184.8px;width:12px;height:8px" viewBox="0 0 12 8"><path d="M2 2L6 5.800l4-3.800" fill="none" stroke="#333" stroke-width="1.100"/></svg><svg class="i" style="left:76px;top:1180px;width:16px;height:16px"><use href="#pkg"/></svg><span class="t" style="left:97.5px;top:1175px;letter-spacing:0.244px;">com.example.hybridrag</span><svg class="i" style="left:80px;top:1209.8px;width:8px;height:12px" viewBox="0 0 8 12"><path d="M1.500 2L5.800 6l-4.300 4" fill="none" stroke="#8c8c8c" stroke-width="1.100"/></svg><svg class="i" style="left:100px;top:1207px;width:16px;height:16px"><use href="#javaT"/></svg><span class="t" style="left:121.5px;top:1202px;letter-spacing:-0.302px;">SmokeTest.java</span><svg class="i" style="left:32px;top:1236.8px;width:8px;height:12px" viewBox="0 0 8 12"><path d="M1.500 2L5.800 6l-4.300 4" fill="none" stroke="#8c8c8c" stroke-width="1.100"/></svg><svg class="i" style="left:52px;top:1234px;width:16px;height:16px"><use href="#lib"/></svg><span class="t" style="left:73.5px;top:1229px;letter-spacing:-0.465px;">JRE System Library</span><span class="t" style="left:239.6px;top:1229px;letter-spacing:-0.691px;color:#b58a3c;">[JavaSE-17]</span><svg class="i" style="left:32px;top:1263.8px;width:8px;height:12px" viewBox="0 0 8 12"><path d="M1.500 2L5.800 6l-4.300 4" fill="none" stroke="#8c8c8c" stroke-width="1.100"/></svg><svg class="i" style="left:52px;top:1261px;width:16px;height:16px"><use href="#lib"/></svg><span class="t" style="left:73.5px;top:1256px;letter-spacing:0.028px;">Maven Dependencies</span><svg class="i" style="left:32px;top:1290.8px;width:8px;height:12px" viewBox="0 0 8 12"><path d="M1.500 2L5.800 6l-4.300 4" fill="none" stroke="#8c8c8c" stroke-width="1.100"/></svg><svg class="i" style="left:52px;top:1288px;width:16px;height:16px"><use href="#folder"/></svg><span class="t" style="left:73.5px;top:1283px;letter-spacing:-0.095px;">evidence</span><svg class="i" style="left:32px;top:1317.8px;width:8px;height:12px" viewBox="0 0 8 12"><path d="M1.500 2L5.800 6l-4.300 4" fill="none" stroke="#8c8c8c" stroke-width="1.100"/></svg><svg class="i" style="left:52px;top:1315px;width:16px;height:16px"><use href="#folderw"/></svg><span class="t" style="left:73.5px;top:1310px;letter-spacing:-0.776px;">src</span><svg class="i" style="left:32px;top:1344.8px;width:8px;height:12px" viewBox="0 0 8 12"><path d="M1.500 2L5.800 6l-4.300 4" fill="none" stroke="#8c8c8c" stroke-width="1.100"/></svg><svg class="i" style="left:52px;top:1342px;width:16px;height:16px"><use href="#folder"/></svg><span class="t" style="left:73.5px;top:1337px;letter-spacing:0.651px;">target</span><svg class="i" style="left:52px;top:1369px;width:16px;height:16px"><use href="#file"/></svg><span class="t" style="left:73.5px;top:1364px;letter-spacing:0.234px;">docker-compose.yml</span><svg class="i" style="left:52px;top:1396px;width:16px;height:16px"><use href="#docker"/></svg><span class="t" style="left:73.5px;top:1391px;letter-spacing:0.162px;">Dockerfile</span><svg class="i" style="left:52px;top:1423px;width:16px;height:16px"><use href="#pom"/></svg><span class="t" style="left:73.5px;top:1418px;letter-spacing:0.258px;">pom.xml</span><svg class="i" style="left:52px;top:1450px;width:16px;height:16px"><use href="#md"/></svg><span class="t" style="left:73.5px;top:1445px;letter-spacing:-0.497px;">README.md</span><div class="a" style="left:1px;top:1472px;width:502px;height:19px;background:#f0f0f0"></div><div class="a" style="left:27px;top:1482.5px;width:400px;height:5px;background:#8c8c8c;border-radius:3px"></div><div class="a" style="left:508px;top:89px;width:1699px;height:725px;background:#fff;border:1px solid #d6d6d6"></div><div class="a" style="left:509px;top:90px;width:1697px;height:32px;background:#e6e6e6;border-bottom:1px solid #dadada"></div><div class="a" style="left:646px;top:90px;width:194px;height:32px;background:#f7f7f7"></div><svg class="i" style="left:514px;top:98px;width:16px;height:16px"><use href="#docker"/></svg><span class="t" style="left:533px;top:93.6px;letter-spacing:0.152px;">Dockerfile</span><svg class="i" style="left:648px;top:98px;width:16px;height:16px"><use href="#java"/></svg><span class="t" style="left:669.8px;top:93.6px;letter-spacing:0.213px;">HybridRagApp...</span><svg class="i" style="left:841px;top:98px;width:16px;height:16px"><use href="#ymltab"/></svg><span class="t" style="left:862.6px;top:93.6px;letter-spacing:0.429px;">application.yml</span><svg class="i" style="left:1024px;top:98px;width:16px;height:16px"><use href="#file"/></svg><span class="t" style="left:1044.9px;top:93.6px;letter-spacing:0.175px;">docker-comp...</span><svg class="i" style="left:1212.5px;top:98px;width:16px;height:16px"><use href="#pom"/></svg><span class="t" style="left:1233.6px;top:93.6px;letter-spacing:0.462px;">springboot-p...</span><svg class="i" style="left:1391px;top:98px;width:16px;height:16px"><use href="#java"/></svg><span class="t" style="left:1412px;top:93.6px;letter-spacing:-0.295px;">SmokeTest.java</span><svg class="i" style="left:1570px;top:98px;width:16px;height:16px"><use href="#java"/></svg><span class="t" style="left:1591.5px;top:93.6px;letter-spacing:0.045px;">QueryControl...</span><svg class="i" style="left:1749.5px;top:98px;width:16px;height:16px"><use href="#java"/></svg><span class="t" style="left:1770.5px;top:93.6px;letter-spacing:-0.161px;">IngestionCo...</span><svg class="i" style="left:1925.5px;top:98px;width:16px;height:16px"><use href="#file"/></svg><span class="t" style="left:1947px;top:93.6px;letter-spacing:0.266px;">application-...</span><svg class="i" style="left:821px;top:101px;width:12px;height:12px" viewBox="0 0 12 12"><path d="M1.500 1.500l9 9M10.500 1.500l-9 9" stroke="#222" stroke-width="1.200"/></svg><svg class="i" style="left:2097px;top:96px;width:16px;height:16px" viewBox="0 0 16 16"><path d="M1 2l2.500 2.500L1 7M4.500 2L7 4.500 4.500 7" fill="none" stroke="#111" stroke-width="1.200"/></svg><span class="t" style="left:2107px;top:94px;font-size:9.500px;color:#223">2</span><svg class="i" style="left:2160.3px;top:93.8px;width:16px;height:16px"><use href="#min"/></svg><svg class="i" style="left:2183.2px;top:94.3px;width:16px;height:16px"><use href="#max"/></svg><div class="a" style="left:509px;top:122px;width:12px;height:666px;background:#f8f8f8"></div><div class="a" style="left:554px;top:122px;width:1px;height:666px;background:#f3f3f3"></div><div class="a" style="left:2168px;top:122px;width:25px;height:666px;background:#f0f0f0"></div><div class="a" style="left:2193px;top:122px;width:13px;height:691px;background:#f8f8f8"></div><div class="a" style="left:554px;top:788px;width:1639px;height:25px;background:#f0f0f0"></div><div class="a" style="left:509px;top:788px;width:45px;height:25px;background:#f8f8f8"></div><svg class="i" style="left:2174px;top:131px;width:13px;height:10px" viewBox="0 0 13 10"><path d="M6.500 1l5.500 8H1z" fill="#a6a6a6" stroke="#a6a6a6" stroke-linejoin="round"/></svg><svg class="i" style="left:2174px;top:769px;width:13px;height:10px" viewBox="0 0 13 10"><path d="M6.500 9L12 1H1z" fill="#a6a6a6" stroke="#a6a6a6" stroke-linejoin="round"/></svg><svg class="i" style="left:563px;top:794px;width:10px;height:13px" viewBox="0 0 10 13"><path d="M1 6.500L9 1v11z" fill="#a6a6a6" stroke="#a6a6a6" stroke-linejoin="round"/></svg><svg class="i" style="left:2148px;top:794px;width:10px;height:13px" viewBox="0 0 10 13"><path d="M9 6.500L1 1v11z" fill="#a6a6a6" stroke="#a6a6a6" stroke-linejoin="round"/></svg><div class="a" style="left:509px;top:214px;width:12px;height:138px;background:#5aa0d8;background-image:repeating-linear-gradient(0deg,rgba(255,255,255,.35) 0 1px,transparent 1px 2px),repeating-linear-gradient(90deg,rgba(255,255,255,.35) 0 1px,transparent 1px 2px)"></div><div class="a" style="left:557px;top:352px;width:1610px;height:22.5px;background:#e8f2fe"></div><span class="t" style="left:509px;width:36.1px;text-align:right;letter-spacing:1.5px;top:122.5px;line-height:22.9px;height:22.9px;color:#787878;font-size:17px">1</span><span class="t m" style="left:557.5px;top:122.8px;line-height:22.9px;height:22.9px"><span class="k">package</span> com.example.hybridrag;</span><span class="t" style="left:509px;width:36.1px;text-align:right;letter-spacing:1.5px;top:145.4px;line-height:22.9px;height:22.9px;color:#787878;font-size:17px">2</span><span class="t" style="left:509px;width:36.1px;text-align:right;letter-spacing:1.5px;top:168.3px;line-height:22.9px;height:22.9px;color:#787878;font-size:17px">3</span><span class="t m" style="left:557.5px;top:168.6px;line-height:22.9px;height:22.9px"><span class="k">import</span> org.springframework.boot.SpringApplication;</span><span class="t" style="left:509px;width:36.1px;text-align:right;letter-spacing:1.5px;top:191.2px;line-height:22.9px;height:22.9px;color:#787878;font-size:17px">5</span><span class="t" style="left:509px;width:36.1px;text-align:right;letter-spacing:1.5px;top:214.1px;line-height:22.9px;height:22.9px;color:#787878;font-size:17px">6</span><span class="t m" style="left:557.5px;top:214.4px;line-height:22.9px;height:22.9px"><span class="an">@SpringBootApplication</span></span><span class="t" style="left:509px;width:36.1px;text-align:right;letter-spacing:1.5px;top:237.0px;line-height:22.9px;height:22.9px;color:#787878;font-size:17px">7</span><span class="t m" style="left:557.5px;top:237.3px;line-height:22.9px;height:22.9px"><span class="k">public</span> <span class="k">class</span> HybridRagApplication {</span><span class="t" style="left:509px;width:36.1px;text-align:right;letter-spacing:1.5px;top:259.9px;line-height:22.9px;height:22.9px;color:#787878;font-size:17px">8</span><span class="t m" style="left:557.5px;top:260.2px;line-height:22.9px;height:22.9px">  <span class="k">public</span> <span class="k">static</span> <span class="k">void</span> main(String[] <span class="v">args</span>) {</span><span class="t" style="left:509px;width:36.1px;text-align:right;letter-spacing:1.5px;top:282.8px;line-height:22.9px;height:22.9px;color:#787878;font-size:17px">9</span><span class="t m" style="left:557.5px;top:283.1px;line-height:22.9px;height:22.9px">    SpringApplication.<i>run</i>(HybridRagApplication.<span class="k">class</span>, <span class="v">args</span>);</span><span class="t" style="left:509px;width:36.1px;text-align:right;letter-spacing:1.5px;top:305.7px;line-height:22.9px;height:22.9px;color:#787878;font-size:17px">10</span><span class="t m" style="left:557.5px;top:306.0px;line-height:22.9px;height:22.9px">  }</span><span class="t" style="left:509px;width:36.1px;text-align:right;letter-spacing:1.5px;top:328.6px;line-height:22.9px;height:22.9px;color:#787878;font-size:17px">11</span><span class="t m" style="left:557.5px;top:328.9px;line-height:22.9px;height:22.9px">}</span><span class="t" style="left:509px;width:36.1px;text-align:right;letter-spacing:1.5px;top:351.5px;line-height:22.9px;height:22.9px;color:#787878;font-size:17px">12</span><svg class="i" style="left:545px;top:174px;width:9px;height:9px" viewBox="0 0 9 9"><circle cx="4.500" cy="4.500" r="3.800" fill="#fff" stroke="#7a8aa8" stroke-width=".900"/><path d="M2.300 4.500h4.400M4.500 2.300v4.400" stroke="#34507a" stroke-width="1"/></svg><svg class="i" style="left:545px;top:265px;width:9px;height:9px" viewBox="0 0 9 9"><circle cx="4.500" cy="4.500" r="3.800" fill="#fff" stroke="#9a9a9a" stroke-width=".900"/><path d="M2.300 4.500h4.400" stroke="#777" stroke-width="1"/></svg><div class="a" style="left:1158px;top:170px;width:12px;height:18px;border:1px solid #9a9a9a;background:#fff"></div><div class="a" style="left:1161px;top:183px;width:2px;height:1.5px;background:#888"></div><div class="a" style="left:1165px;top:183px;width:2px;height:1.5px;background:#888"></div><div class="a" style="left:508px;top:818px;width:1699px;height:673px;background:#fff;border:1px solid #d6d6d6;border-bottom:none"></div><div class="a" style="left:509px;top:819px;width:1697px;height:32px;background:#f0f0f0;border-bottom:1px solid #e2e2e2"></div><div class="a" style="left:509px;top:819px;width:119px;height:32px;background:#fff;border-right:1px solid #d8d8d8"></div><svg class="i" style="left:514.5px;top:827.6px;width:14px;height:14px"><use href="#console"/></svg><span class="t" style="left:533px;top:823px;letter-spacing:-0.388px;">Console</span><svg class="i" style="left:630px;top:827.2px;width:16px;height:16px"><use href="#problems"/></svg><span class="t" style="left:651px;top:823px;letter-spacing:-0.031px;">Problems</span><svg class="i" style="left:743px;top:827.2px;width:16px;height:16px"><use href="#progress"/></svg><span class="t" style="left:762px;top:823px;letter-spacing:-0.379px;">Progress</span><svg class="i" style="left:846px;top:827.2px;width:16px;height:16px"><use href="#dshell"/></svg><span class="t" style="left:865.7px;top:823px;letter-spacing:0.024px;">Debug Shell</span><svg class="i" style="left:980px;top:827.2px;width:16px;height:16px"><use href="#search"/></svg><span class="t" style="left:1000px;top:823px;letter-spacing:-0.701px;">Search</span><svg class="i" style="left:608px;top:830px;width:12px;height:12px" viewBox="0 0 12 12"><path d="M1.500 1.500l9 9M10.500 1.500l-9 9" stroke="#222" stroke-width="1.100"/></svg><svg class="i" style="left:1752.5px;top:822.5px;width:17px;height:17px"><use href="#c_relaunch"/></svg><svg class="i" style="left:1776.0px;top:822.5px;width:17px;height:17px"><use href="#c_stop"/></svg><svg class="i" style="left:1799.2px;top:822.5px;width:17px;height:17px"><use href="#c_x"/></svg><svg class="i" style="left:1821.5px;top:822.5px;width:17px;height:17px"><use href="#c_xx"/></svg><div class="a" style="left:1844.1px;top:822px;width:1px;height:18px;background:#7a7a7a"></div><svg class="i" style="left:1852.5px;top:822.5px;width:17px;height:17px"><use href="#c_clear"/></svg><svg class="i" style="left:1876.1px;top:822.5px;width:17px;height:17px"><use href="#c_lock"/></svg><svg class="i" style="left:1899.0px;top:822.5px;width:17px;height:17px"><use href="#c_wrap"/></svg><div class="a" style="left:1919.7px;top:820.5px;width:22px;height:20.5px;background:#cce4f7;border:1px solid #99d1ff;border-radius:2px"></div><svg class="i" style="left:1922.2px;top:822.5px;width:17px;height:17px"><use href="#c_out"/></svg><div class="a" style="left:1942.7px;top:820.5px;width:22px;height:20.5px;background:#cce4f7;border:1px solid #99d1ff;border-radius:2px"></div><svg class="i" style="left:1945.2px;top:822.5px;width:17px;height:17px"><use href="#c_err"/></svg><div class="a" style="left:1967.1px;top:822px;width:1px;height:18px;background:#7a7a7a"></div><svg class="i" style="left:1976.2px;top:822.5px;width:17px;height:17px"><use href="#c_pin"/></svg><svg class="i" style="left:1999.5px;top:822.5px;width:17px;height:17px"><use href="#c_disp"/></svg><svg class="i" style="left:2023.6px;top:823.5px;width:14px;height:14px"><use href="#ddg"/></svg><svg class="i" style="left:2045.5px;top:822.5px;width:17px;height:17px"><use href="#new"/></svg><svg class="i" style="left:2069px;top:823.5px;width:14px;height:14px"><use href="#dd"/></svg><svg class="i" style="left:2090.5px;top:822.5px;width:17px;height:17px"><use href="#c_copy"/></svg><div class="a" style="left:2111.6px;top:820.5px;width:22px;height:20.5px;background:#cce4f7;border:1px solid #99d1ff;border-radius:2px"></div><svg class="i" style="left:2114.1px;top:822.5px;width:17px;height:17px"><use href="#c_ac"/></svg><svg class="i" style="left:2136.5px;top:822.5px;width:17px;height:17px"><use href="#c_gear"/></svg><svg class="i" style="left:2160px;top:823.2px;width:16px;height:16px"><use href="#min"/></svg><svg class="i" style="left:2182.9px;top:823.2px;width:16px;height:16px"><use href="#max"/></svg><span class="t" style="left:510px;top:849.8px;letter-spacing:0.474px;">HybridRagApplication</span><span class="t" style="left:709.4px;top:849.8px;letter-spacing:0.107px;">[Java Application]</span><span class="t" style="left:866.4px;top:849.8px;letter-spacing:0.343px;">D:\Developer\jdk-17\bin\javaw.exe</span><span class="t" style="left:1177.2px;top:849.8px;letter-spacing:-0.255px;">(3 Jan 2026, 16:49:22)</span><span class="t" style="left:1370.9px;top:849.8px;letter-spacing:0.166px;">[pid: 79728]</span><div class="a" style="left:509px;top:875px;width:1697px;height:1px;background:#8f8f8f"></div><div class="a" style="left:510px;top:877px;width:1670.500px;height:596px;overflow:hidden"><pre class="m" style="position:absolute;left:-3.600px;top:-1.700px;line-height:23px;margin:0">_| | '_ \/ _` | \ \ \ \
 | | | || (_| |  ) ) ) )
 |_|_| |_\__, | / / / /
=========|___/=/_/_/_/

                (v3.5.9)

4.688Z  INFO 79728 --- [hybrid-rag-postgres] [           main] c.e.hybridrag.HybridRagApplication       : Starting HybridRagApplication using Java 17.0.12 with PID 79728
4.695Z  INFO 79728 --- [hybrid-rag-postgres] [           main] c.e.hybridrag.HybridRagApplication       : No active profile set, falling back to 1 default profile: "default"
7.747Z  INFO 79728 --- [hybrid-rag-postgres] [           main] o.s.b.w.embedded.tomcat.TomcatWebServer  : Tomcat initialized with port 8080 (http)
7.766Z  INFO 79728 --- [hybrid-rag-postgres] [           main] o.apache.catalina.core.StandardService   : Starting service [Tomcat]
7.766Z  INFO 79728 --- [hybrid-rag-postgres] [           main] o.apache.catalina.core.StandardEngine    : Starting Servlet engine: [Apache Tomcat/10.1.50]
7.865Z  INFO 79728 --- [hybrid-rag-postgres] [           main] o.a.c.c.C.[Tomcat].[localhost].[/]       : Initializing Spring embedded WebApplicationContext
7.867Z  INFO 79728 --- [hybrid-rag-postgres] [           main] w.s.c.ServletWebServerApplicationContext : Root WebApplicationContext: initialization completed in 3109 ms
9.345Z  INFO 79728 --- [hybrid-rag-postgres] [           main] com.zaxxer.hikari.HikariDataSource       : HikariPool-1 - Starting...
9.644Z  INFO 79728 --- [hybrid-rag-postgres] [           main] com.zaxxer.hikari.pool.HikariPool        : HikariPool-1 - Added connection org.postgresql.jdbc.PgConnection@5b7c8930
9.645Z  INFO 79728 --- [hybrid-rag-postgres] [           main] com.zaxxer.hikari.HikariDataSource       : HikariPool-1 - Start completed.
9.698Z  INFO 79728 --- [hybrid-rag-postgres] [           main] org.flywaydb.core.FlywayExecutor         : Database: jdbc:postgresql://localhost:5432/hybrid_rag (PostgreSQL 16.4)
9.822Z  INFO 79728 --- [hybrid-rag-postgres] [           main] o.f.core.internal.command.DbValidate     : Successfully validated 2 migrations (execution time 00:00.060s)
9.865Z  INFO 79728 --- [hybrid-rag-postgres] [           main] o.f.core.internal.command.DbMigrate      : Current version of schema "public": 2
9.873Z  INFO 79728 --- [hybrid-rag-postgres] [           main] o.f.core.internal.command.DbMigrate      : Schema "public" is up to date. No migration necessary.
0.075Z  INFO 79728 --- [hybrid-rag-postgres] [           main] o.s.b.a.e.web.EndpointLinksResolver      : Exposing 3 endpoints beneath base path '/actuator'
0.206Z  INFO 79728 --- [hybrid-rag-postgres] [           main] o.s.b.w.embedded.tomcat.TomcatWebServer  : Tomcat started on port 8080 (http) with context path '/'
0.229Z  INFO 79728 --- [hybrid-rag-postgres] [           main] c.e.hybridrag.HybridRagApplication       : Started HybridRagApplication in 6.473 seconds (process running for 7.214)
0.331Z  INFO 79728 --- [hybrid-rag-postgres] [           main] c.e.hybridrag.config.PgvectorJdbcConfig  : pgvector JDBC types registered</pre></div><div class="a" style="left:794.5px;top:990px;width:1px;height:22px;background:#000"></div><div class="a" style="left:2181px;top:877px;width:25px;height:614px;background:#f0f0f0"></div><div class="a" style="left:2191px;top:962px;width:5px;height:484px;background:#8c8c8c;border-radius:3px"></div><div class="a" style="left:509px;top:1473px;width:1672px;height:18px;background:#f0f0f0"></div><div class="a" style="left:627px;top:1482.5px;width:688px;height:5px;background:#8c8c8c;border-radius:3px"></div><div class="a" style="left:2212px;top:89px;width:15px;height:1402px;background:#fff;border-left:1px solid #d6d6d6"></div><div class="a" style="left:2212px;top:89px;width:15px;height:56px;background:#ececec;border-left:1px solid #d6d6d6"></div><svg class="i" style="left:2217px;top:97px;width:16px;height:16px"><use href="#bug"/></svg><svg class="i" style="left:2218px;top:153px;width:10px;height:8px" viewBox="0 0 10 8"><path d="M.500 1.500L5 6l4.500-4.500" fill="none" stroke="#222" stroke-width="1.200"/></svg><div class="a" style="left:2212px;top:694px;width:15px;height:25px;background:#ececec"></div><div class="a" style="left:2211px;top:719px;width:16px;height:5px;background:#f0f0f0"></div><div class="a" style="left:2212px;top:724px;width:15px;height:54px;background:#f2f2f2;border-top:1px solid #d6d6d6"></div><span class="t" style="left:2214.500px;top:727px;font-size:11px;font-weight:bold;color:#3a86c8">(x)</span><div class="a" style="left:2211px;top:1269.5px;width:16px;height:6px;background:#ececec"></div><div class="a" style="left:2212px;top:1275.5px;width:15px;height:29.5px;background:#f6f6f6"></div><div class="a" style="left:2211px;top:1305px;width:16px;height:5px;background:#ececec"></div><svg class="i" style="left:2218px;top:1286px;width:10px;height:12px" viewBox="0 0 10 12"><path d="M9 1L1 6l8 5" fill="none" stroke="#667" stroke-width="1.200"/></svg><svg class="i" style="left:2220px;top:1478px;width:8px;height:13px" viewBox="0 0 8 13"><path d="M8 0L0 6.500 8 13z" fill="#a6a6a6"/></svg></body></html>
